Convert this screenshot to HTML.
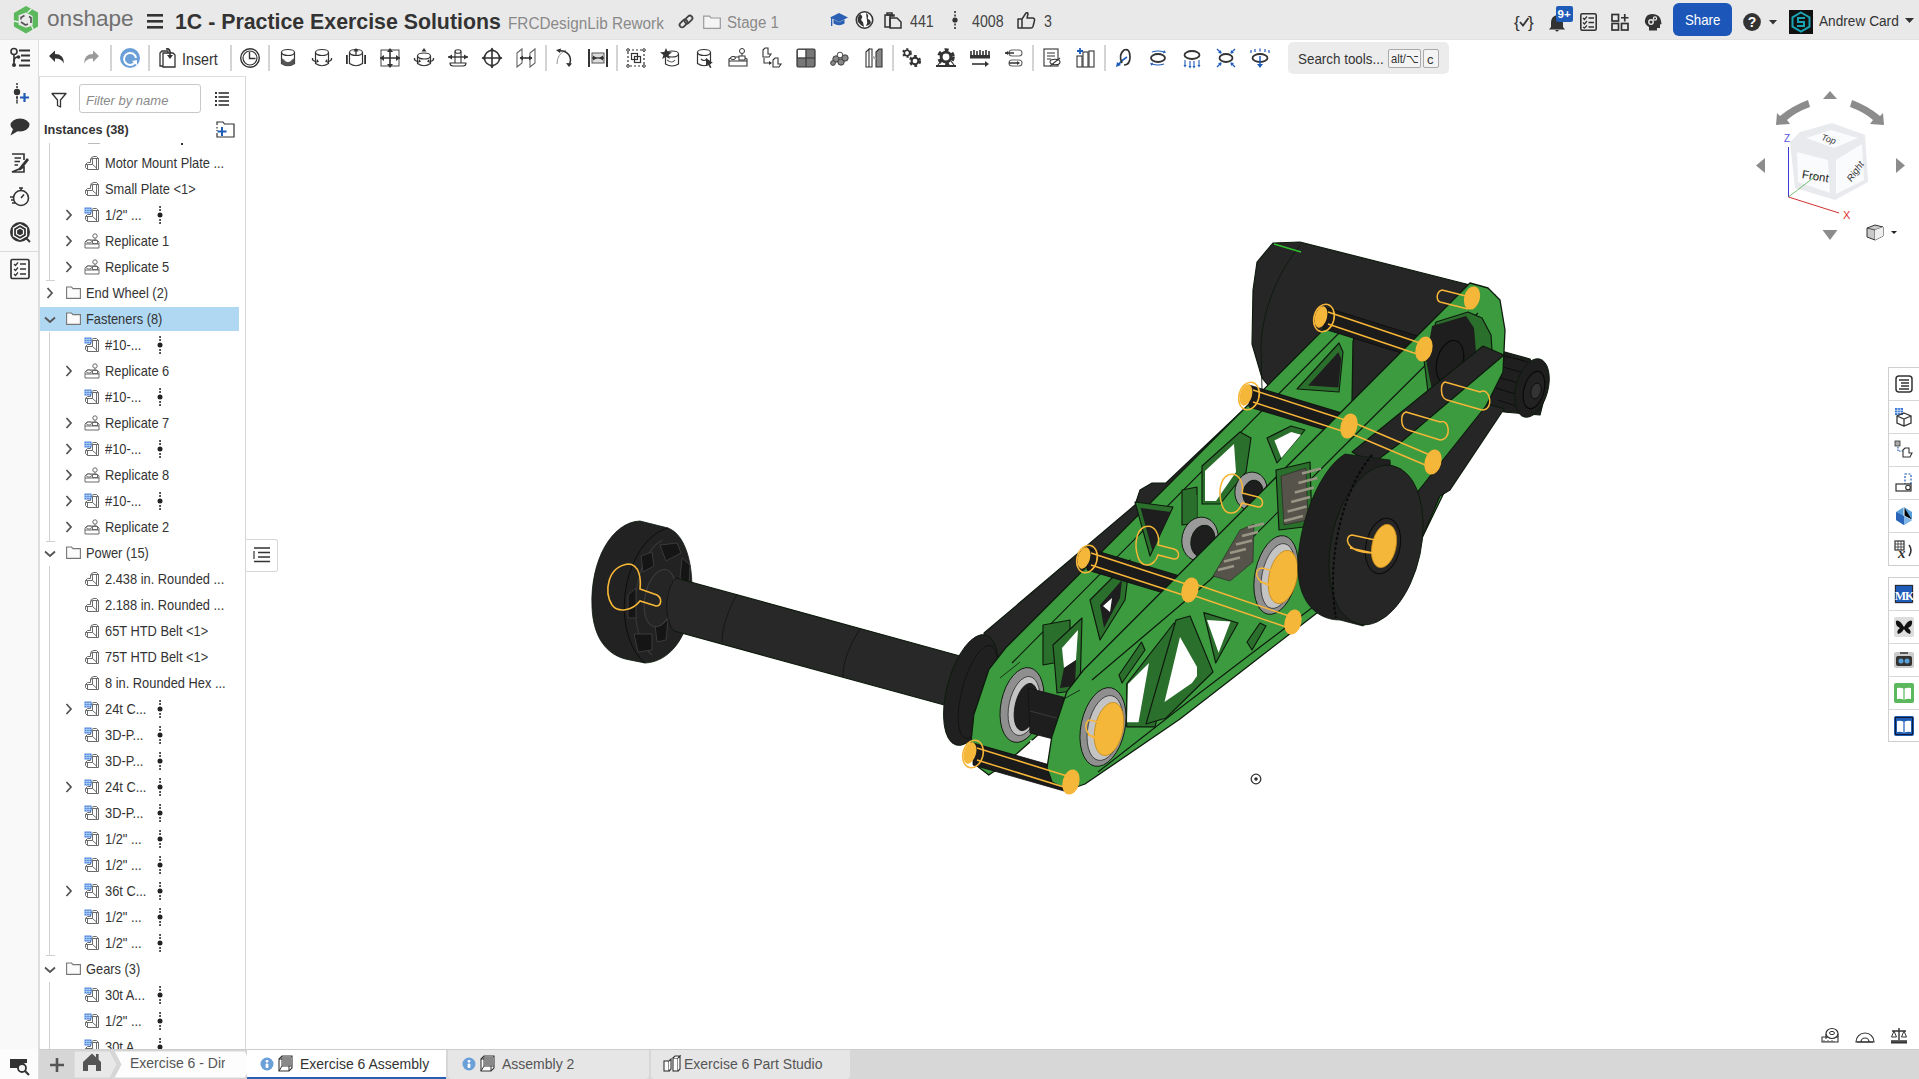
<!DOCTYPE html>
<html><head><meta charset="utf-8">
<style>
*{box-sizing:border-box;margin:0;padding:0}
html,body{width:1919px;height:1079px;overflow:hidden;background:#fff;font-family:"Liberation Sans",sans-serif;color:#333}
.a{position:absolute}
.t{white-space:nowrap;line-height:1}
svg{overflow:visible}
</style></head><body>

<div class="a" style="left:0px;top:0px;width:1919px;height:40px;background:#e9e9e9;border-bottom:1px solid #e2e2e2"></div>
<div class="a" style="left:0px;top:40px;width:39px;height:1039px;background:#f9f9f9;border-right:1px solid #dedede"></div>
<div class="a" style="left:0px;top:1049px;width:39px;height:30px;background:#fcfcfc;border-right:1px solid #dedede"></div>
<div class="a" style="left:39px;top:1050px;width:1880px;height:29px;background:#d7d7d7"></div>
<svg class="a" style="left:10px;top:4px" width="32" height="32" viewBox="0 0 32 32">
<path fill-rule="evenodd" fill="#5cb85c" d="M16 2 L28 8.6 V22.5 L16 29.4 L3.9 22.5 V8.9 Z M16 8.6 L22.6 11.9 V21.4 L16 23.7 L8.6 20.8 V11.3 Z"/>
<path d="M17.5 8.8 L21.5 5 M3.5 17 L9 18 M21.6 22 L23.5 26" stroke="#e9f5e9" stroke-width="1.4"/>
<path d="M14.5 11.5 L11 13.5 V15.5 M11 18 L15.5 21 L18 20 M19 12.5 L21 13.7 V19" fill="none" stroke="#555" stroke-width="1.7"/>
</svg>
<div class="a t" style="left:47px;top:8px;font-size:22.6px;color:#707070;font-weight:normal;letter-spacing:0px">onshape</div>
<svg class="a" style="left:147px;top:14px" width="16" height="15" viewBox="0 0 16 15"><rect x="0" y="0" width="16" height="2.6" fill="#333"/><rect x="0" y="6" width="16" height="2.6" fill="#333"/><rect x="0" y="12" width="16" height="2.6" fill="#333"/></svg>
<div class="a t" style="left:175px;top:11.2px;font-size:22.4px;color:#333;font-weight:bold;transform:scaleX(0.952);transform-origin:0 0;">1C - Practice Exercise Solutions</div>
<div class="a t" style="left:508px;top:15px;font-size:16.4px;color:#8a8a8a;font-weight:normal;transform:scaleX(0.935);transform-origin:0 0;">FRCDesignLib Rework</div>
<svg class="a" style="left:678px;top:14px" width="16" height="16" viewBox="0 0 16 16"><g fill="none" stroke="#444" stroke-width="1.8"><rect x="1" y="7" width="9" height="5" rx="2.5" transform="rotate(-45 5.5 9.5)"/><rect x="6" y="3" width="9" height="5" rx="2.5" transform="rotate(-45 10.5 5.5)"/></g></svg>
<svg class="a" style="left:703px;top:15px" width="18" height="14" viewBox="0 0 18 14"><path d="M0.7 1.2 H6.5 L8 3 H17.3 V13.3 H0.7 Z" fill="#f4f4f4" stroke="#9a9a9a" stroke-width="1.2"/></svg>
<div class="a t" style="left:726.5px;top:14.8px;font-size:16px;color:#8a8a8a;font-weight:normal;transform:scaleX(0.94);transform-origin:0 0;">Stage 1</div>
<svg class="a" style="left:830px;top:12px" width="18" height="16" viewBox="0 0 18 16"><path d="M9 1 L18 5.5 L9 10 L0 5.5 Z" fill="#2b5fb3"/><path d="M3.5 7.5 V11.5 Q9 15 14.5 11.5 V7.5 L9 10.3 Z" fill="#2b5fb3"/><rect x="1" y="6" width="1.3" height="8" fill="#2b5fb3"/></svg>
<svg class="a" style="left:855px;top:11px" width="19" height="18" viewBox="0 0 19 18"><circle cx="9.5" cy="9" r="8.2" fill="#fff" stroke="#333" stroke-width="1.6"/><path d="M5 3 Q8 5 7 7 Q5 9 8 11 L9 16 Q6 15 3 11 Q2 6 5 3Z M11 2 Q14 4 13 6 Q12 8 15 9 L16 12 Q14 15 11 15 Q13 12 12 10 Z" fill="#333"/></svg>
<svg class="a" style="left:884px;top:11px" width="18" height="18" viewBox="0 0 18 18"><g fill="none" stroke="#333" stroke-width="1.5"><path d="M3 2 H8 V4 H3 Z"/><path d="M1 4 H10 L10 5 H6 V16 H1 Z"/><path d="M6 7 H13 L17 11 V17 H6 Z"/></g></svg>
<div class="a t" style="left:909.5px;top:14px;font-size:15.8px;color:#444;font-weight:normal;transform:scaleX(0.9);transform-origin:0 0;">441</div>
<svg class="a" style="left:952px;top:11px" width="6" height="18" viewBox="0 0 6 18"><rect x="2.2" y="0" width="1.6" height="2" fill="#333"/><rect x="2.2" y="3.5" width="1.6" height="2" fill="#333"/><circle cx="3" cy="9" r="2.6" fill="#333"/><rect x="2.2" y="12.5" width="1.6" height="2" fill="#333"/><rect x="2.2" y="16" width="1.6" height="2" fill="#333"/></svg>
<div class="a t" style="left:972px;top:14px;font-size:15.8px;color:#444;font-weight:normal;transform:scaleX(0.9);transform-origin:0 0;">4008</div>
<svg class="a" style="left:1017px;top:11px" width="19" height="18" viewBox="0 0 19 18"><path d="M1 8 H5 V17 H1 Z M5 8 L9 2 Q11 1 11 3 L10 7 H16 Q18 7.5 17.5 9.5 L16 15.5 Q15.5 17 14 17 H5" fill="none" stroke="#333" stroke-width="1.5" stroke-linejoin="round"/></svg>
<div class="a t" style="left:1043.5px;top:14px;font-size:15.8px;color:#444;font-weight:normal;transform:scaleX(0.9);transform-origin:0 0;">3</div>
<svg class="a" style="left:1514px;top:13px" width="21" height="18" viewBox="0 0 21 18"><text x="0" y="15" font-family="Liberation Sans" font-size="17" fill="#333">{</text><text x="14" y="15" font-family="Liberation Sans" font-size="17" fill="#333">}</text><path d="M6 9 L9 12.5 L14.5 5" fill="none" stroke="#333" stroke-width="1.8"/></svg>
<svg class="a" style="left:1548px;top:14px" width="18" height="18" viewBox="0 0 18 18"><path d="M9 1 Q15 2 15 9 V13 L17 15.5 H1 L3 13 V9 Q3 2 9 1Z" fill="#333"/><path d="M7 16 Q9 19 11 16Z" fill="#333"/></svg>
<div class="a" style="left:1556px;top:6px;width:17px;height:16px;background:#1f5cb8;border-radius:2px"></div>
<div class="a t" style="left:1557.5px;top:8.5px;font-size:11.5px;color:#fff;font-weight:bold;">9+</div>
<svg class="a" style="left:1580px;top:13px" width="17" height="18" viewBox="0 0 17 18"><rect x="0.8" y="0.8" width="15.4" height="16.4" rx="1.5" fill="none" stroke="#333" stroke-width="1.6"/><path d="M3 5 L4.5 6.5 L7 3.5 M3 9.5 L4.5 11 L7 8 M3 14 L4.5 15 L7 12.5" fill="none" stroke="#333" stroke-width="1.2"/><path d="M8.5 5 H14 M8.5 9.5 H14 M8.5 14 H14" stroke="#333" stroke-width="1.5"/></svg>
<svg class="a" style="left:1611px;top:13px" width="19" height="18" viewBox="0 0 19 18"><g fill="none" stroke="#333" stroke-width="1.7"><rect x="1" y="1.5" width="6.5" height="6.5"/><rect x="1" y="10.5" width="6.5" height="6.5"/><rect x="10.5" y="10.5" width="6.5" height="6.5"/><path d="M13.75 1 V8.5 M10 4.75 H17.5"/></g></svg>
<svg class="a" style="left:1644px;top:13px" width="18" height="18" viewBox="0 0 18 18"><path d="M8 1 Q16 1 17 8 L17.5 11 L16 11.5 V15 H13 V17.5 H5 V14 Q0 11 1 7 Q2 1 8 1Z" fill="#333"/><circle cx="7" cy="9" r="2.2" fill="none" stroke="#e9e9e9" stroke-width="1.4"/><circle cx="11" cy="5.5" r="1.6" fill="none" stroke="#e9e9e9" stroke-width="1.2"/></svg>
<div class="a" style="left:1673px;top:3px;width:59px;height:33px;background:#1c56b8;border-radius:6px"></div>
<div class="a t" style="left:1685px;top:11.8px;font-size:15px;color:#fff;font-weight:normal;transform:scaleX(0.885);transform-origin:0 0;">Share</div>
<svg class="a" style="left:1743px;top:12.8px" width="18" height="18" viewBox="0 0 18 18"><circle cx="9" cy="9" r="8.9" fill="#333"/><text x="9" y="14" text-anchor="middle" font-family="Liberation Sans" font-weight="bold" font-size="14" fill="#fff">?</text></svg>
<svg class="a" style="left:1769px;top:20px" width="8" height="5" viewBox="0 0 8 5"><path d="M0 0 H8 L4 4.5Z" fill="#333"/></svg>
<svg class="a" style="left:1789px;top:10px" width="24" height="24" viewBox="0 0 24 24"><rect width="24" height="24" fill="#111"/><path d="M12 2.5 L20.5 7.3 V16.7 L12 21.5 L3.5 16.7 V7.3 Z" fill="none" stroke="#1aa3b3" stroke-width="2"/><path d="M16 8 H9 V12 H15 V16 H8" fill="none" stroke="#1aa3b3" stroke-width="2"/></svg>
<div class="a t" style="left:1818.8px;top:13px;font-size:15.2px;color:#333;font-weight:normal;transform:scaleX(0.9);transform-origin:0 0;">Andrew Card</div>
<svg class="a" style="left:1905px;top:18px" width="9" height="5" viewBox="0 0 9 5"><path d="M0 0 H9 L4.5 5Z" fill="#333"/></svg>
<div class="a" style="left:110px;top:45px;width:2px;height:26px;background:#d4d4d4"></div>
<div class="a" style="left:148px;top:45px;width:2px;height:26px;background:#d4d4d4"></div>
<div class="a" style="left:230px;top:45px;width:2px;height:26px;background:#d4d4d4"></div>
<div class="a" style="left:268px;top:45px;width:2px;height:26px;background:#d4d4d4"></div>
<div class="a" style="left:545px;top:45px;width:2px;height:26px;background:#d4d4d4"></div>
<div class="a" style="left:616px;top:45px;width:2px;height:26px;background:#d4d4d4"></div>
<div class="a" style="left:892px;top:45px;width:2px;height:26px;background:#d4d4d4"></div>
<div class="a" style="left:1032px;top:45px;width:2px;height:26px;background:#d4d4d4"></div>
<div class="a" style="left:1104px;top:45px;width:2px;height:26px;background:#d4d4d4"></div>
<svg class="a" style="left:46.0px;top:47.0px" width="22" height="22" viewBox="0 0 22 22"><path d="M3 9 L9 3.5 V7 Q18 7 18 16.5 Q15 11 9 11.5 V15 Z" fill="#333"/></svg>
<svg class="a" style="left:80.0px;top:47.0px" width="22" height="22" viewBox="0 0 22 22"><path d="M19 9 L13 3.5 V7 Q4 7 4 16.5 Q7 11 13 11.5 V15 Z" fill="#9a9a9a"/></svg>
<svg class="a" style="left:119.0px;top:47.0px" width="22" height="22" viewBox="0 0 22 22"><circle cx="11" cy="11" r="10" fill="#6a9fd8"/><path d="M15.5 16 A6 6 0 1 1 17 11" fill="none" stroke="#fff" stroke-width="2"/><path d="M13 14 L18 18.5 L18 13Z" fill="#fff"/></svg>
<svg class="a" style="left:157.0px;top:47.0px" width="22" height="22" viewBox="0 0 22 22"><g fill="none" stroke="#333" stroke-width="1.3"><path d="M3 6 L5 4 H11 V19 H3 Z"/><path d="M6 6 H16 L18 8 V20 H6 Z" fill="#fff"/></g><path d="M9 2 Q14 1 13 8" fill="none" stroke="#333" stroke-width="1.5"/><path d="M10 8 H16 L13 12Z" fill="#333"/></svg>
<div class="a t" style="left:182px;top:51.5px;font-size:15.6px;color:#333;font-weight:normal;transform:scaleX(0.915);transform-origin:0 0;">Insert</div>
<svg class="a" style="left:239.0px;top:47.0px" width="22" height="22" viewBox="0 0 22 22"><circle cx="11" cy="11" r="9.3" fill="#fff" stroke="#333" stroke-width="1.4"/><circle cx="11" cy="11" r="7" fill="none" stroke="#333" stroke-width="1.2"/><path d="M10.5 5 V11.5 H16.5" fill="none" stroke="#333" stroke-width="1.4"/></svg>
<svg class="a" style="left:277.0px;top:47.0px" width="22" height="22" viewBox="0 0 22 22"><ellipse cx="11" cy="5.5" rx="6.5" ry="3" fill="#fff" stroke="#333" stroke-width="1.2"/><path d="M4.5 5.5 V16.5 Q11 21 17.5 16.5 V5.5" fill="none" stroke="#333" stroke-width="1.2"/><path d="M4.5 11 Q8 13 8 14 Q11 16 14 14 Q14 13 17.5 11 V16.5 Q11 21 4.5 16.5Z" fill="#555"/></svg>
<svg class="a" style="left:311.0px;top:47.0px" width="22" height="22" viewBox="0 0 22 22"><ellipse cx="11" cy="5.5" rx="6.5" ry="3" fill="#fff" stroke="#333" stroke-width="1.2"/><path d="M4.5 5.5 V16.5 Q11 21 17.5 16.5 V5.5" fill="none" stroke="#333" stroke-width="1.2"/><path d="M1.5 11 Q1 14 5 14.5 M20.5 11 Q21 14 17 14.5" fill="none" stroke="#333" stroke-width="1.4"/><path d="M6 12 L8 14.5 L5 16Z M16 12 L14 14.5 L17 16Z" fill="#333"/></svg>
<svg class="a" style="left:345.0px;top:47.0px" width="22" height="22" viewBox="0 0 22 22"><ellipse cx="11" cy="5.5" rx="6.5" ry="3" fill="#fff" stroke="#333" stroke-width="1.2"/><path d="M4.5 5.5 V16.5 Q11 21 17.5 16.5 V5.5" fill="none" stroke="#333" stroke-width="1.2"/><rect x="1" y="8" width="1.8" height="9" fill="#333"/><rect x="19.2" y="8" width="1.8" height="9" fill="#333"/><path d="M11 1 L8.5 4.5 H13.5Z" fill="#333"/><path d="M11 4 V8" stroke="#333" stroke-width="1.3"/></svg>
<svg class="a" style="left:379.0px;top:47.0px" width="22" height="22" viewBox="0 0 22 22"><rect x="2" y="3" width="18" height="16" fill="none" stroke="#444" stroke-width="1"/><path d="M11 2 V20 M1 11 H21" stroke="#333" stroke-width="1.6"/><path d="M11 1 L8 5 H14Z M11 21 L8 17 H14Z M1 11 L5 8 V14Z M21 11 L17 8 V14Z" fill="#333"/></svg>
<svg class="a" style="left:413.0px;top:47.0px" width="22" height="22" viewBox="0 0 22 22"><ellipse cx="11" cy="9" rx="6.5" ry="3" fill="#fff" stroke="#333" stroke-width="1.2"/><path d="M4.5 9 V16.5 Q11 21 17.5 16.5 V9" fill="none" stroke="#333" stroke-width="1.2"/><path d="M11 1 L8.5 4.5 H13.5Z" fill="#333"/><path d="M1.5 11 Q1 14 5 14.5 M20.5 11 Q21 14 17 14.5" fill="none" stroke="#333" stroke-width="1.4"/><path d="M6 12 L8 14.5 L5 16Z M16 12 L14 14.5 L17 16Z" fill="#333"/></svg>
<svg class="a" style="left:447.0px;top:47.0px" width="22" height="22" viewBox="0 0 22 22"><ellipse cx="11" cy="4.5" rx="3" ry="1.8" fill="#fff" stroke="#333" stroke-width="1.1"/><path d="M8 4.5 V16 M14 4.5 V16" stroke="#333" stroke-width="1.1"/><path d="M3 16 Q3 19 6 19 H16 Q19 19 19 16 Z" fill="#fff" stroke="#333" stroke-width="1.1"/><path d="M1 10 H21" stroke="#333" stroke-width="1.4"/><path d="M1 10 L5 7.5 V12.5Z M21 10 L17 7.5 V12.5Z" fill="#333"/></svg>
<svg class="a" style="left:481.0px;top:47.0px" width="22" height="22" viewBox="0 0 22 22"><circle cx="11" cy="11" r="7.5" fill="none" stroke="#333" stroke-width="1.6"/><path d="M11 1.5 V20.5 M1.5 11 H20.5" stroke="#333" stroke-width="1.6"/><path d="M11 0.5 L8.5 4 H13.5Z M11 21.5 L8.5 18 H13.5Z M0.5 11 L4 8.5 V13.5Z M21.5 11 L18 8.5 V13.5Z" fill="#333"/></svg>
<svg class="a" style="left:515.0px;top:47.0px" width="22" height="22" viewBox="0 0 22 22"><path d="M2 6 L7 2 V16 L2 20Z M15 6 L20 2 V16 L15 20Z" fill="none" stroke="#666" stroke-width="1.1"/><path d="M5 11 H17" stroke="#333" stroke-width="1.6"/><path d="M4.5 11 L8 8.5 V13.5Z M17.5 11 L14 8.5 V13.5Z" fill="#333"/></svg>
<svg class="a" style="left:553.0px;top:47.0px" width="22" height="22" viewBox="0 0 22 22"><path d="M4 17 Q4 7 13 3" fill="none" stroke="#888" stroke-width="0.9"/><path d="M5 4 Q12 3 16 8 Q19 13 16 18" fill="none" stroke="#333" stroke-width="1.5"/><path d="M3 3 L8 1.5 L7 6Z M16 20 L13 16 L19 16.5Z" fill="#333"/></svg>
<svg class="a" style="left:587.0px;top:47.0px" width="22" height="22" viewBox="0 0 22 22"><rect x="1" y="2" width="2" height="18" fill="#333"/><rect x="19" y="2" width="2" height="18" fill="#333"/><rect x="5" y="6" width="12" height="10" fill="#ddd" stroke="#555" stroke-width="1"/><path d="M5 11 H17" stroke="#333" stroke-width="1.3"/><path d="M10 11 L6 8.5 V13.5Z M12 11 L16 8.5 V13.5Z" fill="#333"/></svg>
<svg class="a" style="left:625.0px;top:47.0px" width="22" height="22" viewBox="0 0 22 22"><rect x="3" y="3" width="16" height="16" fill="none" stroke="#333" stroke-width="1.2" stroke-dasharray="2 2"/><circle cx="3" cy="3" r="1.3" fill="#fff" stroke="#333"/><circle cx="19" cy="3" r="1.3" fill="#fff" stroke="#333"/><circle cx="3" cy="19" r="1.3" fill="#fff" stroke="#333"/><circle cx="19" cy="19" r="1.3" fill="#fff" stroke="#333"/><rect x="6.5" y="6.5" width="6" height="6" fill="none" stroke="#333" stroke-width="1.2"/><rect x="9.5" y="9.5" width="6" height="6" fill="none" stroke="#333" stroke-width="1.2"/></svg>
<svg class="a" style="left:659.0px;top:47.0px" width="22" height="22" viewBox="0 0 22 22"><ellipse cx="13" cy="7" rx="6.5" ry="3" fill="#fff" stroke="#333" stroke-width="1.2"/><path d="M6.5 7 V17 Q13 21 19.5 17 V7" fill="none" stroke="#333" stroke-width="1.2"/><path d="M8 13 Q13 17 16 13" fill="none" stroke="#666" stroke-width="1.2"/><path d="M7 1 L8.7 5 L13 5.2 L9.6 8 L10.8 12 L7 9.8 L3.2 12 L4.4 8 L1 5.2 L5.3 5Z" fill="#333"/></svg>
<svg class="a" style="left:693.0px;top:47.0px" width="22" height="22" viewBox="0 0 22 22"><ellipse cx="11" cy="5.5" rx="6.5" ry="3" fill="#fff" stroke="#333" stroke-width="1.2"/><path d="M4.5 5.5 V16.5 Q11 21 17.5 16.5 V5.5" fill="none" stroke="#333" stroke-width="1.2"/><path d="M8 12 Q11 15 14 12" fill="none" stroke="#333" stroke-width="1.1"/><path d="M13 11 L20 16 L16.5 16.5 L18.5 20.5 L17 21 L15 17 L13 19Z" fill="#333"/></svg>
<svg class="a" style="left:727.0px;top:47.0px" width="22" height="22" viewBox="0 0 22 22"><path d="M2 12 L6 10 H12 L12 10 H16 L20 12 V19 H2Z" fill="#fff" stroke="#333" stroke-width="1.1"/><path d="M2 14 H20" stroke="#333" stroke-width="1"/><ellipse cx="6" cy="11" rx="2.5" ry="1.5" fill="#fff" stroke="#333"/><ellipse cx="15" cy="4" rx="2.5" ry="2.5" fill="#fff" stroke="#333"/><path d="M15 6.5 V11" stroke="#333"/><rect x="12" y="9" width="6" height="4" fill="#fff" stroke="#333" stroke-width="1"/></svg>
<svg class="a" style="left:761.0px;top:47.0px" width="22" height="22" viewBox="0 0 22 22"><path d="M2 3 L4 1 H7 V7 H10 L8 10 H2Z" fill="#fff" stroke="#333" stroke-width="1.1"/><path d="M12 13 L14 11 H17 V17 H20 L18 20 H12Z" fill="#fff" stroke="#333" stroke-width="1.1"/><path d="M3 11 V16 H10" fill="none" stroke="#333" stroke-width="1.1"/><path d="M11 16 L8 14 V18Z" fill="#333"/></svg>
<svg class="a" style="left:795.0px;top:47.0px" width="22" height="22" viewBox="0 0 22 22"><rect x="2" y="2" width="18" height="18" rx="1.5" fill="#777" stroke="#333" stroke-width="1.2"/><rect x="3" y="3" width="7.5" height="7.5" fill="#fff"/><path d="M11 2 V20 M2 11 H20" stroke="#333" stroke-width="1"/></svg>
<svg class="a" style="left:829.0px;top:47.0px" width="22" height="22" viewBox="0 0 22 22"><g fill="#888" stroke="#333" stroke-width="0.9"><circle cx="7" cy="12" r="3.2"/><circle cx="12" cy="15" r="3.2"/><circle cx="16" cy="11" r="3.2"/><circle cx="11" cy="8" r="2.8" fill="#fff"/><circle cx="4" cy="16" r="2.4"/></g></svg>
<svg class="a" style="left:863.0px;top:47.0px" width="22" height="22" viewBox="0 0 22 22"><path d="M3 5 L6 2 V20 L3 20Z M6 2 H9 V20 H6" fill="#fff" stroke="#333" stroke-width="1.1"/><path d="M13 5 L16 2 H19 V20 H13Z" fill="#888" stroke="#333" stroke-width="1.1"/><path d="M9 9 L13 12" stroke="#aaa" stroke-width="2"/></svg>
<svg class="a" style="left:901.0px;top:47.0px" width="22" height="22" viewBox="0 0 22 22"><circle cx="6" cy="6" r="3.6" fill="none" stroke="#333" stroke-width="2.52" stroke-dasharray="1.9800000000000002 1.9800000000000002"/><circle cx="6" cy="6" r="2.7" fill="none" stroke="#333" stroke-width="1.62"/><circle cx="14" cy="14" r="4.5" fill="none" stroke="#333" stroke-width="3.15" stroke-dasharray="2.475 2.475"/><circle cx="14" cy="14" r="3.375" fill="none" stroke="#333" stroke-width="2.025"/></svg>
<svg class="a" style="left:935.0px;top:47.0px" width="22" height="22" viewBox="0 0 22 22"><circle cx="11" cy="10" r="6.5" fill="none" stroke="#333" stroke-width="4.55" stroke-dasharray="3.575 3.575"/><circle cx="11" cy="10" r="4.875" fill="none" stroke="#333" stroke-width="2.9250000000000003"/><rect x="1" y="18" width="20" height="2" fill="#333"/><path d="M3 18 L6 14 M19 18 L16 14" stroke="#333" stroke-width="1.2"/></svg>
<svg class="a" style="left:969.0px;top:47.0px" width="22" height="22" viewBox="0 0 22 22"><path d="M2 4 V11 M5 3 V11 M8 4 V11 M11 3 V11 M14 4 V11 M17 3 V11 M20 4 V11" stroke="#333" stroke-width="1.6"/><rect x="1" y="8" width="20" height="3.5" fill="#333"/><path d="M3 17 H18" stroke="#333" stroke-width="1.6"/><path d="M20 17 L16 14 V20Z" fill="#333"/></svg>
<svg class="a" style="left:1003.0px;top:47.0px" width="22" height="22" viewBox="0 0 22 22"><rect x="6" y="3" width="13" height="6" rx="3" fill="none" stroke="#666" stroke-width="1.1"/><rect x="6" y="13" width="13" height="6" rx="3" fill="none" stroke="#666" stroke-width="1.1"/><path d="M2 6 H11 M6 16 H15" stroke="#333" stroke-width="1.3"/><path d="M2 6 L5 4 V8Z M17 16 L14 14 V18Z" fill="#333"/></svg>
<svg class="a" style="left:1041.0px;top:47.0px" width="22" height="22" viewBox="0 0 22 22"><rect x="3" y="2" width="14" height="17" fill="#fff" stroke="#333" stroke-width="1.1"/><path d="M6 6 H14 M6 9 H14 M6 12 H10" stroke="#333" stroke-width="1"/><ellipse cx="14" cy="15" rx="5" ry="2.8" fill="#fff" stroke="#333" stroke-width="1.1"/><path d="M9 19 L19 11" stroke="#333" stroke-width="1.1"/></svg>
<svg class="a" style="left:1075.0px;top:47.0px" width="22" height="22" viewBox="0 0 22 22"><rect x="2" y="9" width="5" height="11" fill="#fff" stroke="#333" stroke-width="1.1"/><rect x="8" y="5" width="5" height="15" fill="#fff" stroke="#333" stroke-width="1.1"/><rect x="14" y="4" width="5" height="16" fill="#fff" stroke="#333" stroke-width="1.1"/><path d="M5 1 V7 M2 4 H8" stroke="#1f5cb8" stroke-width="1.8"/></svg>
<svg class="a" style="left:1113.0px;top:47.0px" width="22" height="22" viewBox="0 0 22 22"><path d="M5 18 Q9 13 14 10" fill="none" stroke="#1f5cb8" stroke-width="1.6"/><path d="M3 20 L4 15 L8 18Z" fill="#1f5cb8"/><path d="M9 16 Q5 8 11 3 Q17 1 17 10 Q17 18 11 18" fill="none" stroke="#333" stroke-width="1.7"/></svg>
<svg class="a" style="left:1147.0px;top:47.0px" width="22" height="22" viewBox="0 0 22 22"><ellipse cx="11" cy="11" rx="7" ry="4" fill="none" stroke="#333" stroke-width="1.8"/><path d="M5 5 Q11 3 17 5 M5 17 Q11 19 17 17" fill="none" stroke="#1f5cb8" stroke-width="1.2"/><path d="M17 3 L19 5.5 L16 6.5Z M5 19 L3 16.5 L6 15.5Z" fill="#1f5cb8"/></svg>
<svg class="a" style="left:1181.0px;top:47.0px" width="22" height="22" viewBox="0 0 22 22"><ellipse cx="11" cy="8" rx="7.5" ry="4" fill="none" stroke="#333" stroke-width="1.8"/><path d="M4 13 V19 M9 14 V20 M13 14 V20 M18 13 V19" stroke="#1f5cb8" stroke-width="1.1"/><path d="M2.5 18 H5.5 L4 20.5Z M7.5 19 H10.5 L9 21.5Z M11.5 19 H14.5 L13 21.5Z M16.5 18 H19.5 L18 20.5Z" fill="#1f5cb8"/></svg>
<svg class="a" style="left:1215.0px;top:47.0px" width="22" height="22" viewBox="0 0 22 22"><ellipse cx="11" cy="11" rx="6.5" ry="4" fill="none" stroke="#333" stroke-width="1.8"/><path d="M2 2 L6 6 M20 2 L16 6 M2 20 L6 16 M20 20 L16 16" stroke="#1f5cb8" stroke-width="1.3"/><path d="M6.5 6.5 L3 6 L6 3Z M15.5 6.5 L19 6 L16 3Z M6.5 15.5 L3 16 L6 19Z M15.5 15.5 L19 16 L16 19Z" fill="#1f5cb8"/></svg>
<svg class="a" style="left:1249.0px;top:47.0px" width="22" height="22" viewBox="0 0 22 22"><path d="M2 3 V6 M6 2 V5 M11 1.5 V4.5 M16 2 V5 M20 3 V6" stroke="#1f5cb8" stroke-width="1.2"/><ellipse cx="11" cy="11" rx="7.5" ry="4" fill="none" stroke="#333" stroke-width="1.8"/><path d="M11 9 V19" stroke="#1f5cb8" stroke-width="1.5"/><path d="M8 17 H14 L11 21Z" fill="#1f5cb8"/></svg>
<div class="a" style="left:1288px;top:42px;width:161px;height:32px;background:#ececec;border-radius:5px"></div>
<div class="a t" style="left:1298.3px;top:50.5px;font-size:15px;color:#333;font-weight:normal;transform:scaleX(0.893);transform-origin:0 0;">Search tools...</div>
<div class="a" style="left:1388px;top:49px;width:33px;height:19px;background:#f4f4f4;border:1px solid #aaa;border-radius:2px"></div>
<div class="a t" style="left:1391.3px;top:52.5px;font-size:12.2px;color:#333;font-weight:normal;transform:scaleX(0.92);transform-origin:0 0;">alt/⌥</div>
<div class="a" style="left:1422.5px;top:49px;width:16px;height:19px;background:#f4f4f4;border:1px solid #aaa;border-radius:2px"></div>
<div class="a t" style="left:1427px;top:52.5px;font-size:13px;color:#333;font-weight:normal;">c</div>
<svg class="a" style="left:9px;top:47px" width="22" height="22" viewBox="0 0 22 22"><circle cx="5" cy="4.5" r="3" fill="none" stroke="#333" stroke-width="1.6"/><path d="M5 7.5 V18" stroke="#333" stroke-width="1.6"/><circle cx="5" cy="18" r="2" fill="#333"/><path d="M5 15 Q5 10 9 10" fill="none" stroke="#333" stroke-width="1.6"/><circle cx="9.5" cy="10" r="1.8" fill="#333"/><path d="M10 3.5 H21 M12 8.5 H21 M12 13.5 H21 M10 18.5 H21" stroke="#333" stroke-width="1.8"/></svg>
<svg class="a" style="left:9px;top:82px" width="22" height="22" viewBox="0 0 22 22"><path d="M8 1 V4 M8 15 V18 M8 19.5 V22" stroke="#333" stroke-width="1.5" stroke-dasharray="2 1.5"/><circle cx="8" cy="10" r="3.2" fill="#333"/><path d="M8 4 V6 M8 14 V21" stroke="#333" stroke-width="1.5" stroke-dasharray="2 1.5"/><path d="M15.5 11 V20 M11 15.5 H20" stroke="#1f5cb8" stroke-width="2.2"/></svg>
<svg class="a" style="left:9px;top:116px" width="22" height="22" viewBox="0 0 22 22"><ellipse cx="11" cy="9" rx="9.5" ry="6.5" fill="#333"/><path d="M4 13 L1.5 19.5 L9 15Z" fill="#333"/></svg>
<svg class="a" style="left:9px;top:152px" width="22" height="22" viewBox="0 0 22 22"><path d="M3 2 H15 V8 M15 15 V20 H3 Z" fill="none" stroke="#333" stroke-width="1.6"/><path d="M5.5 6 H12 M5.5 9.5 H11 M5.5 13 H9" stroke="#333" stroke-width="1.5"/><path d="M10 16 L18 6 L20 8 L12 18 L9.5 18.5Z" fill="#333"/></svg>
<svg class="a" style="left:9px;top:186px" width="22" height="22" viewBox="0 0 22 22"><circle cx="12" cy="12" r="7.5" fill="none" stroke="#333" stroke-width="1.6"/><path d="M10 2 H14 M12 2 V4.5 M12 12 L15 8.5" stroke="#333" stroke-width="1.6"/><path d="M1 11 H5 M2 14 H5 M3 17 H6" stroke="#333" stroke-width="1.3"/></svg>
<svg class="a" style="left:9px;top:221px" width="22" height="22" viewBox="0 0 22 22"><circle cx="11" cy="11" r="10" fill="#333"/><path d="M11 3.5 L17.5 7.2 V14.8 L11 18.5 L4.5 14.8 V7.2Z" fill="none" stroke="#fff" stroke-width="1.3"/><path d="M11 7 L14.5 9 V13 L11 15 L7.5 13 V9Z" fill="none" stroke="#fff" stroke-width="1.2"/><path d="M17 17 L21 21" stroke="#333" stroke-width="2"/></svg>
<div class="a" style="left:0px;top:251px;width:39px;height:1px;background:#dadada"></div>
<svg class="a" style="left:9px;top:258px" width="22" height="22" viewBox="0 0 22 22"><rect x="2" y="1.5" width="18" height="19" rx="1.5" fill="none" stroke="#333" stroke-width="1.7"/><path d="M5 6 L6.5 7.5 L9 4.5 M5 11 L6.5 12.5 L9 9.5 M5 16 L6.5 17.5 L9 14.5" fill="none" stroke="#333" stroke-width="1.2"/><path d="M11 6 H17 M11 11 H17 M11 16 H17" stroke="#333" stroke-width="1.6"/></svg>
<svg class="a" style="left:9px;top:1054px" width="22" height="22" viewBox="0 0 22 22"><path d="M1 5 H18 V9 Q12 9 10 14 H1Z" fill="#333"/><circle cx="13" cy="14" r="4" fill="#f6f6f6" stroke="#333" stroke-width="1.8"/><path d="M16 17 L20 21" stroke="#333" stroke-width="2.2"/></svg>
<div class="a" style="left:39px;top:76px;width:207px;height:974px;background:#fff;border-top:1px solid #dedede;border-left:1px solid #dedede;border-right:1px solid #d6d6d6"></div>
<svg class="a" style="left:51px;top:92px" width="16" height="16" viewBox="0 0 16 16"><path d="M1 1.5 H15 L9.5 8 V15 L6.5 13.5 V8 Z" fill="none" stroke="#333" stroke-width="1.3" stroke-linejoin="round"/></svg>
<div class="a" style="left:79px;top:84px;width:122px;height:29px;border:1px solid #c9c9c9;border-radius:3px;background:#fff"></div>
<div class="a t" style="left:86px;top:94px;font-size:13px;color:#8a8a8a;font-weight:normal;font-style:italic">Filter by name</div>
<svg class="a" style="left:215px;top:92px" width="14" height="14" viewBox="0 0 14 14"><g fill="#333"><rect x="0" y="0" width="2" height="2"/><rect x="0" y="4" width="2" height="2"/><rect x="0" y="8" width="2" height="2"/><rect x="0" y="12" width="2" height="2"/><rect x="3.5" y="0.2" width="10.5" height="1.6"/><rect x="3.5" y="4.2" width="10.5" height="1.6"/><rect x="3.5" y="8.2" width="10.5" height="1.6"/><rect x="3.5" y="12.2" width="10.5" height="1.6"/></g></svg>
<div class="a t" style="left:44px;top:124px;font-size:12.7px;color:#333;font-weight:bold;">Instances (38)</div>
<svg class="a" style="left:216px;top:121px" width="19" height="17" viewBox="0 0 19 17"><path d="M1 4 V1 H7 L8.5 3 H18 V16 H1 V12" fill="none" stroke="#333" stroke-width="1.2"/><path d="M1 6 V10" stroke="#333" stroke-width="1.2" stroke-dasharray="1.5 1.5"/><path d="M6 6 V15 M1.5 10.5 H10.5" stroke="#1f5cb8" stroke-width="2"/></svg>
<div class="a" style="left:40px;top:143px;width:205px;height:907px;overflow:hidden">
<div class="a" style="left:0px;top:164px;width:199px;height:24px;background:#b0d8f3"></div>
<div class="a" style="left:9px;top:0px;width:1px;height:137px;background:#d0d0d0"></div>
<div class="a" style="left:6px;top:137px;width:9px;height:1px;background:#d0d0d0"></div>
<div class="a" style="left:9px;top:189px;width:1px;height:209px;background:#d0d0d0"></div>
<div class="a" style="left:6px;top:398px;width:9px;height:1px;background:#d0d0d0"></div>
<div class="a" style="left:9px;top:423px;width:1px;height:389px;background:#d0d0d0"></div>
<div class="a" style="left:6px;top:812px;width:9px;height:1px;background:#d0d0d0"></div>
<div class="a" style="left:9px;top:839px;width:1px;height:78px;background:#d0d0d0"></div>
<div class="a" style="left:48px;top:0px;width:12px;height:1px;background:#bbb"></div>
<div class="a" style="left:141px;top:0px;width:2px;height:2px;background:#333"></div>
<svg class="a" style="left:44px;top:12px" width="16" height="16" viewBox="0 0 16 16"><g fill="#fff" stroke="#6b6b6b" stroke-width="1" stroke-linejoin="round"><path d="M6.5 5 Q6.5 1.5 10 1.5 H12.5 L14.5 3.5 V14.5 H3.5 L1.5 12.5 V9.5 L3.5 7.5 H6.5 Z"/><path d="M6.5 5 Q6.5 3.5 8.5 3.5 H14.5 M8.5 3.5 V9.5 H1.5 M3.5 9.5 V14.5 M8.5 9.5 L12.5 13 V14.5 M12.5 3.5 V13" fill="none"/></g></svg>
<div class="a t" style="left:65px;top:12.5px;font-size:14.2px;color:#333;transform:scaleX(0.905);transform-origin:0 0">Motor Mount Plate ...</div>
<svg class="a" style="left:44px;top:38px" width="16" height="16" viewBox="0 0 16 16"><g fill="#fff" stroke="#6b6b6b" stroke-width="1" stroke-linejoin="round"><path d="M6.5 5 Q6.5 1.5 10 1.5 H12.5 L14.5 3.5 V14.5 H3.5 L1.5 12.5 V9.5 L3.5 7.5 H6.5 Z"/><path d="M6.5 5 Q6.5 3.5 8.5 3.5 H14.5 M8.5 3.5 V9.5 H1.5 M3.5 9.5 V14.5 M8.5 9.5 L12.5 13 V14.5 M12.5 3.5 V13" fill="none"/></g></svg>
<div class="a t" style="left:65px;top:38.5px;font-size:14.2px;color:#333;transform:scaleX(0.905);transform-origin:0 0">Small Plate &lt;1&gt;</div>
<svg class="a" style="left:25px;top:66px" width="8" height="12" viewBox="0 0 8 12"><path d="M1.5 1 L6 6 L1.5 11" fill="none" stroke="#555" stroke-width="1.8"/></svg>
<svg class="a" style="left:44px;top:64px" width="16" height="16" viewBox="0 0 16 16"><g fill="#fff" stroke="#6b6b6b" stroke-width="1" stroke-linejoin="round"><path d="M6.5 5 Q6.5 1.5 10 1.5 H12.5 L14.5 3.5 V14.5 H3.5 L1.5 12.5 V9.5 L3.5 7.5 H6.5 Z"/><path d="M6.5 5 Q6.5 3.5 8.5 3.5 H14.5 M8.5 3.5 V9.5 H1.5 M3.5 9.5 V14.5 M8.5 9.5 L12.5 13 V14.5 M12.5 3.5 V13" fill="none"/></g><rect x="0.5" y="0.5" width="7" height="6" fill="#4a86e0"/><path d="M0.5 2.5 H7.5 M0.5 4.5 H7.5 M2.8 0.5 V6.5 M5.2 0.5 V6.5" stroke="#cfe0f7" stroke-width="0.6"/></svg>
<div class="a t" style="left:65px;top:64.5px;font-size:14.2px;color:#333;transform:scaleX(0.905);transform-origin:0 0">1/2" ...</div>
<svg class="a" style="left:117px;top:63px" width="6" height="18" viewBox="0 0 6 18"><rect x="2.3" y="0" width="1.5" height="2" fill="#222"/><rect x="2.3" y="3" width="1.5" height="2" fill="#222"/><circle cx="3" cy="9" r="2.5" fill="#222"/><rect x="2.3" y="13" width="1.5" height="2" fill="#222"/><rect x="2.3" y="16" width="1.5" height="2" fill="#222"/></svg>
<svg class="a" style="left:25px;top:92px" width="8" height="12" viewBox="0 0 8 12"><path d="M1.5 1 L6 6 L1.5 11" fill="none" stroke="#555" stroke-width="1.8"/></svg>
<svg class="a" style="left:44px;top:90px" width="16" height="16" viewBox="0 0 16 16"><g fill="#fff" stroke="#6b6b6b" stroke-width="1"><path d="M1 9 L3 7 H13 L15 9 V15 H1 Z"/><path d="M1 11 H15"/><ellipse cx="5" cy="8.5" rx="2.5" ry="1.6"/><circle cx="11" cy="3" r="2.2"/><path d="M11 5.2 V8"/><rect x="8.5" y="7.5" width="5" height="3"/></g></svg>
<div class="a t" style="left:65px;top:90.5px;font-size:14.2px;color:#333;transform:scaleX(0.905);transform-origin:0 0">Replicate 1</div>
<svg class="a" style="left:25px;top:118px" width="8" height="12" viewBox="0 0 8 12"><path d="M1.5 1 L6 6 L1.5 11" fill="none" stroke="#555" stroke-width="1.8"/></svg>
<svg class="a" style="left:44px;top:116px" width="16" height="16" viewBox="0 0 16 16"><g fill="#fff" stroke="#6b6b6b" stroke-width="1"><path d="M1 9 L3 7 H13 L15 9 V15 H1 Z"/><path d="M1 11 H15"/><ellipse cx="5" cy="8.5" rx="2.5" ry="1.6"/><circle cx="11" cy="3" r="2.2"/><path d="M11 5.2 V8"/><rect x="8.5" y="7.5" width="5" height="3"/></g></svg>
<div class="a t" style="left:65px;top:116.5px;font-size:14.2px;color:#333;transform:scaleX(0.905);transform-origin:0 0">Replicate 5</div>
<svg class="a" style="left:6px;top:144px" width="8" height="12" viewBox="0 0 8 12"><path d="M1.5 1 L6 6 L1.5 11" fill="none" stroke="#555" stroke-width="1.8"/></svg>
<svg class="a" style="left:26px;top:143px" width="15" height="13" viewBox="0 0 15 13"><path d="M0.6 1 H5.5 L7 2.6 H14.4 V12.4 H0.6 Z" fill="#fbfbfb" stroke="#777" stroke-width="1.1"/></svg>
<div class="a t" style="left:46px;top:142.5px;font-size:14.2px;color:#333;transform:scaleX(0.905);transform-origin:0 0">End Wheel (2)</div>
<svg class="a" style="left:4px;top:173px" width="12" height="8" viewBox="0 0 12 8"><path d="M1 1.5 L6 6 L11 1.5" fill="none" stroke="#555" stroke-width="1.8"/></svg>
<svg class="a" style="left:26px;top:169px" width="15" height="13" viewBox="0 0 15 13"><path d="M0.6 1 H5.5 L7 2.6 H14.4 V12.4 H0.6 Z" fill="#fbfbfb" stroke="#777" stroke-width="1.1"/></svg>
<div class="a t" style="left:46px;top:168.5px;font-size:14.2px;color:#333;transform:scaleX(0.905);transform-origin:0 0">Fasteners (8)</div>
<svg class="a" style="left:44px;top:194px" width="16" height="16" viewBox="0 0 16 16"><g fill="#fff" stroke="#6b6b6b" stroke-width="1" stroke-linejoin="round"><path d="M6.5 5 Q6.5 1.5 10 1.5 H12.5 L14.5 3.5 V14.5 H3.5 L1.5 12.5 V9.5 L3.5 7.5 H6.5 Z"/><path d="M6.5 5 Q6.5 3.5 8.5 3.5 H14.5 M8.5 3.5 V9.5 H1.5 M3.5 9.5 V14.5 M8.5 9.5 L12.5 13 V14.5 M12.5 3.5 V13" fill="none"/></g><rect x="0.5" y="0.5" width="7" height="6" fill="#4a86e0"/><path d="M0.5 2.5 H7.5 M0.5 4.5 H7.5 M2.8 0.5 V6.5 M5.2 0.5 V6.5" stroke="#cfe0f7" stroke-width="0.6"/></svg>
<div class="a t" style="left:65px;top:194.5px;font-size:14.2px;color:#333;transform:scaleX(0.905);transform-origin:0 0">#10-...</div>
<svg class="a" style="left:117px;top:193px" width="6" height="18" viewBox="0 0 6 18"><rect x="2.3" y="0" width="1.5" height="2" fill="#222"/><rect x="2.3" y="3" width="1.5" height="2" fill="#222"/><circle cx="3" cy="9" r="2.5" fill="#222"/><rect x="2.3" y="13" width="1.5" height="2" fill="#222"/><rect x="2.3" y="16" width="1.5" height="2" fill="#222"/></svg>
<svg class="a" style="left:25px;top:222px" width="8" height="12" viewBox="0 0 8 12"><path d="M1.5 1 L6 6 L1.5 11" fill="none" stroke="#555" stroke-width="1.8"/></svg>
<svg class="a" style="left:44px;top:220px" width="16" height="16" viewBox="0 0 16 16"><g fill="#fff" stroke="#6b6b6b" stroke-width="1"><path d="M1 9 L3 7 H13 L15 9 V15 H1 Z"/><path d="M1 11 H15"/><ellipse cx="5" cy="8.5" rx="2.5" ry="1.6"/><circle cx="11" cy="3" r="2.2"/><path d="M11 5.2 V8"/><rect x="8.5" y="7.5" width="5" height="3"/></g></svg>
<div class="a t" style="left:65px;top:220.5px;font-size:14.2px;color:#333;transform:scaleX(0.905);transform-origin:0 0">Replicate 6</div>
<svg class="a" style="left:44px;top:246px" width="16" height="16" viewBox="0 0 16 16"><g fill="#fff" stroke="#6b6b6b" stroke-width="1" stroke-linejoin="round"><path d="M6.5 5 Q6.5 1.5 10 1.5 H12.5 L14.5 3.5 V14.5 H3.5 L1.5 12.5 V9.5 L3.5 7.5 H6.5 Z"/><path d="M6.5 5 Q6.5 3.5 8.5 3.5 H14.5 M8.5 3.5 V9.5 H1.5 M3.5 9.5 V14.5 M8.5 9.5 L12.5 13 V14.5 M12.5 3.5 V13" fill="none"/></g><rect x="0.5" y="0.5" width="7" height="6" fill="#4a86e0"/><path d="M0.5 2.5 H7.5 M0.5 4.5 H7.5 M2.8 0.5 V6.5 M5.2 0.5 V6.5" stroke="#cfe0f7" stroke-width="0.6"/></svg>
<div class="a t" style="left:65px;top:246.5px;font-size:14.2px;color:#333;transform:scaleX(0.905);transform-origin:0 0">#10-...</div>
<svg class="a" style="left:117px;top:245px" width="6" height="18" viewBox="0 0 6 18"><rect x="2.3" y="0" width="1.5" height="2" fill="#222"/><rect x="2.3" y="3" width="1.5" height="2" fill="#222"/><circle cx="3" cy="9" r="2.5" fill="#222"/><rect x="2.3" y="13" width="1.5" height="2" fill="#222"/><rect x="2.3" y="16" width="1.5" height="2" fill="#222"/></svg>
<svg class="a" style="left:25px;top:274px" width="8" height="12" viewBox="0 0 8 12"><path d="M1.5 1 L6 6 L1.5 11" fill="none" stroke="#555" stroke-width="1.8"/></svg>
<svg class="a" style="left:44px;top:272px" width="16" height="16" viewBox="0 0 16 16"><g fill="#fff" stroke="#6b6b6b" stroke-width="1"><path d="M1 9 L3 7 H13 L15 9 V15 H1 Z"/><path d="M1 11 H15"/><ellipse cx="5" cy="8.5" rx="2.5" ry="1.6"/><circle cx="11" cy="3" r="2.2"/><path d="M11 5.2 V8"/><rect x="8.5" y="7.5" width="5" height="3"/></g></svg>
<div class="a t" style="left:65px;top:272.5px;font-size:14.2px;color:#333;transform:scaleX(0.905);transform-origin:0 0">Replicate 7</div>
<svg class="a" style="left:25px;top:300px" width="8" height="12" viewBox="0 0 8 12"><path d="M1.5 1 L6 6 L1.5 11" fill="none" stroke="#555" stroke-width="1.8"/></svg>
<svg class="a" style="left:44px;top:298px" width="16" height="16" viewBox="0 0 16 16"><g fill="#fff" stroke="#6b6b6b" stroke-width="1" stroke-linejoin="round"><path d="M6.5 5 Q6.5 1.5 10 1.5 H12.5 L14.5 3.5 V14.5 H3.5 L1.5 12.5 V9.5 L3.5 7.5 H6.5 Z"/><path d="M6.5 5 Q6.5 3.5 8.5 3.5 H14.5 M8.5 3.5 V9.5 H1.5 M3.5 9.5 V14.5 M8.5 9.5 L12.5 13 V14.5 M12.5 3.5 V13" fill="none"/></g><rect x="0.5" y="0.5" width="7" height="6" fill="#4a86e0"/><path d="M0.5 2.5 H7.5 M0.5 4.5 H7.5 M2.8 0.5 V6.5 M5.2 0.5 V6.5" stroke="#cfe0f7" stroke-width="0.6"/></svg>
<div class="a t" style="left:65px;top:298.5px;font-size:14.2px;color:#333;transform:scaleX(0.905);transform-origin:0 0">#10-...</div>
<svg class="a" style="left:117px;top:297px" width="6" height="18" viewBox="0 0 6 18"><rect x="2.3" y="0" width="1.5" height="2" fill="#222"/><rect x="2.3" y="3" width="1.5" height="2" fill="#222"/><circle cx="3" cy="9" r="2.5" fill="#222"/><rect x="2.3" y="13" width="1.5" height="2" fill="#222"/><rect x="2.3" y="16" width="1.5" height="2" fill="#222"/></svg>
<svg class="a" style="left:25px;top:326px" width="8" height="12" viewBox="0 0 8 12"><path d="M1.5 1 L6 6 L1.5 11" fill="none" stroke="#555" stroke-width="1.8"/></svg>
<svg class="a" style="left:44px;top:324px" width="16" height="16" viewBox="0 0 16 16"><g fill="#fff" stroke="#6b6b6b" stroke-width="1"><path d="M1 9 L3 7 H13 L15 9 V15 H1 Z"/><path d="M1 11 H15"/><ellipse cx="5" cy="8.5" rx="2.5" ry="1.6"/><circle cx="11" cy="3" r="2.2"/><path d="M11 5.2 V8"/><rect x="8.5" y="7.5" width="5" height="3"/></g></svg>
<div class="a t" style="left:65px;top:324.5px;font-size:14.2px;color:#333;transform:scaleX(0.905);transform-origin:0 0">Replicate 8</div>
<svg class="a" style="left:25px;top:352px" width="8" height="12" viewBox="0 0 8 12"><path d="M1.5 1 L6 6 L1.5 11" fill="none" stroke="#555" stroke-width="1.8"/></svg>
<svg class="a" style="left:44px;top:350px" width="16" height="16" viewBox="0 0 16 16"><g fill="#fff" stroke="#6b6b6b" stroke-width="1" stroke-linejoin="round"><path d="M6.5 5 Q6.5 1.5 10 1.5 H12.5 L14.5 3.5 V14.5 H3.5 L1.5 12.5 V9.5 L3.5 7.5 H6.5 Z"/><path d="M6.5 5 Q6.5 3.5 8.5 3.5 H14.5 M8.5 3.5 V9.5 H1.5 M3.5 9.5 V14.5 M8.5 9.5 L12.5 13 V14.5 M12.5 3.5 V13" fill="none"/></g><rect x="0.5" y="0.5" width="7" height="6" fill="#4a86e0"/><path d="M0.5 2.5 H7.5 M0.5 4.5 H7.5 M2.8 0.5 V6.5 M5.2 0.5 V6.5" stroke="#cfe0f7" stroke-width="0.6"/></svg>
<div class="a t" style="left:65px;top:350.5px;font-size:14.2px;color:#333;transform:scaleX(0.905);transform-origin:0 0">#10-...</div>
<svg class="a" style="left:117px;top:349px" width="6" height="18" viewBox="0 0 6 18"><rect x="2.3" y="0" width="1.5" height="2" fill="#222"/><rect x="2.3" y="3" width="1.5" height="2" fill="#222"/><circle cx="3" cy="9" r="2.5" fill="#222"/><rect x="2.3" y="13" width="1.5" height="2" fill="#222"/><rect x="2.3" y="16" width="1.5" height="2" fill="#222"/></svg>
<svg class="a" style="left:25px;top:378px" width="8" height="12" viewBox="0 0 8 12"><path d="M1.5 1 L6 6 L1.5 11" fill="none" stroke="#555" stroke-width="1.8"/></svg>
<svg class="a" style="left:44px;top:376px" width="16" height="16" viewBox="0 0 16 16"><g fill="#fff" stroke="#6b6b6b" stroke-width="1"><path d="M1 9 L3 7 H13 L15 9 V15 H1 Z"/><path d="M1 11 H15"/><ellipse cx="5" cy="8.5" rx="2.5" ry="1.6"/><circle cx="11" cy="3" r="2.2"/><path d="M11 5.2 V8"/><rect x="8.5" y="7.5" width="5" height="3"/></g></svg>
<div class="a t" style="left:65px;top:376.5px;font-size:14.2px;color:#333;transform:scaleX(0.905);transform-origin:0 0">Replicate 2</div>
<svg class="a" style="left:4px;top:407px" width="12" height="8" viewBox="0 0 12 8"><path d="M1 1.5 L6 6 L11 1.5" fill="none" stroke="#555" stroke-width="1.8"/></svg>
<svg class="a" style="left:26px;top:403px" width="15" height="13" viewBox="0 0 15 13"><path d="M0.6 1 H5.5 L7 2.6 H14.4 V12.4 H0.6 Z" fill="#fbfbfb" stroke="#777" stroke-width="1.1"/></svg>
<div class="a t" style="left:46px;top:402.5px;font-size:14.2px;color:#333;transform:scaleX(0.905);transform-origin:0 0">Power (15)</div>
<svg class="a" style="left:44px;top:428px" width="16" height="16" viewBox="0 0 16 16"><g fill="#fff" stroke="#6b6b6b" stroke-width="1" stroke-linejoin="round"><path d="M6.5 5 Q6.5 1.5 10 1.5 H12.5 L14.5 3.5 V14.5 H3.5 L1.5 12.5 V9.5 L3.5 7.5 H6.5 Z"/><path d="M6.5 5 Q6.5 3.5 8.5 3.5 H14.5 M8.5 3.5 V9.5 H1.5 M3.5 9.5 V14.5 M8.5 9.5 L12.5 13 V14.5 M12.5 3.5 V13" fill="none"/></g></svg>
<div class="a t" style="left:65px;top:428.5px;font-size:14.2px;color:#333;transform:scaleX(0.905);transform-origin:0 0">2.438 in. Rounded ...</div>
<svg class="a" style="left:44px;top:454px" width="16" height="16" viewBox="0 0 16 16"><g fill="#fff" stroke="#6b6b6b" stroke-width="1" stroke-linejoin="round"><path d="M6.5 5 Q6.5 1.5 10 1.5 H12.5 L14.5 3.5 V14.5 H3.5 L1.5 12.5 V9.5 L3.5 7.5 H6.5 Z"/><path d="M6.5 5 Q6.5 3.5 8.5 3.5 H14.5 M8.5 3.5 V9.5 H1.5 M3.5 9.5 V14.5 M8.5 9.5 L12.5 13 V14.5 M12.5 3.5 V13" fill="none"/></g></svg>
<div class="a t" style="left:65px;top:454.5px;font-size:14.2px;color:#333;transform:scaleX(0.905);transform-origin:0 0">2.188 in. Rounded ...</div>
<svg class="a" style="left:44px;top:480px" width="16" height="16" viewBox="0 0 16 16"><g fill="#fff" stroke="#6b6b6b" stroke-width="1" stroke-linejoin="round"><path d="M6.5 5 Q6.5 1.5 10 1.5 H12.5 L14.5 3.5 V14.5 H3.5 L1.5 12.5 V9.5 L3.5 7.5 H6.5 Z"/><path d="M6.5 5 Q6.5 3.5 8.5 3.5 H14.5 M8.5 3.5 V9.5 H1.5 M3.5 9.5 V14.5 M8.5 9.5 L12.5 13 V14.5 M12.5 3.5 V13" fill="none"/></g></svg>
<div class="a t" style="left:65px;top:480.5px;font-size:14.2px;color:#333;transform:scaleX(0.905);transform-origin:0 0">65T HTD Belt &lt;1&gt;</div>
<svg class="a" style="left:44px;top:506px" width="16" height="16" viewBox="0 0 16 16"><g fill="#fff" stroke="#6b6b6b" stroke-width="1" stroke-linejoin="round"><path d="M6.5 5 Q6.5 1.5 10 1.5 H12.5 L14.5 3.5 V14.5 H3.5 L1.5 12.5 V9.5 L3.5 7.5 H6.5 Z"/><path d="M6.5 5 Q6.5 3.5 8.5 3.5 H14.5 M8.5 3.5 V9.5 H1.5 M3.5 9.5 V14.5 M8.5 9.5 L12.5 13 V14.5 M12.5 3.5 V13" fill="none"/></g></svg>
<div class="a t" style="left:65px;top:506.5px;font-size:14.2px;color:#333;transform:scaleX(0.905);transform-origin:0 0">75T HTD Belt &lt;1&gt;</div>
<svg class="a" style="left:44px;top:532px" width="16" height="16" viewBox="0 0 16 16"><g fill="#fff" stroke="#6b6b6b" stroke-width="1" stroke-linejoin="round"><path d="M6.5 5 Q6.5 1.5 10 1.5 H12.5 L14.5 3.5 V14.5 H3.5 L1.5 12.5 V9.5 L3.5 7.5 H6.5 Z"/><path d="M6.5 5 Q6.5 3.5 8.5 3.5 H14.5 M8.5 3.5 V9.5 H1.5 M3.5 9.5 V14.5 M8.5 9.5 L12.5 13 V14.5 M12.5 3.5 V13" fill="none"/></g></svg>
<div class="a t" style="left:65px;top:532.5px;font-size:14.2px;color:#333;transform:scaleX(0.905);transform-origin:0 0">8 in. Rounded Hex ...</div>
<svg class="a" style="left:25px;top:560px" width="8" height="12" viewBox="0 0 8 12"><path d="M1.5 1 L6 6 L1.5 11" fill="none" stroke="#555" stroke-width="1.8"/></svg>
<svg class="a" style="left:44px;top:558px" width="16" height="16" viewBox="0 0 16 16"><g fill="#fff" stroke="#6b6b6b" stroke-width="1" stroke-linejoin="round"><path d="M6.5 5 Q6.5 1.5 10 1.5 H12.5 L14.5 3.5 V14.5 H3.5 L1.5 12.5 V9.5 L3.5 7.5 H6.5 Z"/><path d="M6.5 5 Q6.5 3.5 8.5 3.5 H14.5 M8.5 3.5 V9.5 H1.5 M3.5 9.5 V14.5 M8.5 9.5 L12.5 13 V14.5 M12.5 3.5 V13" fill="none"/></g><rect x="0.5" y="0.5" width="7" height="6" fill="#4a86e0"/><path d="M0.5 2.5 H7.5 M0.5 4.5 H7.5 M2.8 0.5 V6.5 M5.2 0.5 V6.5" stroke="#cfe0f7" stroke-width="0.6"/></svg>
<div class="a t" style="left:65px;top:558.5px;font-size:14.2px;color:#333;transform:scaleX(0.905);transform-origin:0 0">24t C...</div>
<svg class="a" style="left:117px;top:557px" width="6" height="18" viewBox="0 0 6 18"><rect x="2.3" y="0" width="1.5" height="2" fill="#222"/><rect x="2.3" y="3" width="1.5" height="2" fill="#222"/><circle cx="3" cy="9" r="2.5" fill="#222"/><rect x="2.3" y="13" width="1.5" height="2" fill="#222"/><rect x="2.3" y="16" width="1.5" height="2" fill="#222"/></svg>
<svg class="a" style="left:44px;top:584px" width="16" height="16" viewBox="0 0 16 16"><g fill="#fff" stroke="#6b6b6b" stroke-width="1" stroke-linejoin="round"><path d="M6.5 5 Q6.5 1.5 10 1.5 H12.5 L14.5 3.5 V14.5 H3.5 L1.5 12.5 V9.5 L3.5 7.5 H6.5 Z"/><path d="M6.5 5 Q6.5 3.5 8.5 3.5 H14.5 M8.5 3.5 V9.5 H1.5 M3.5 9.5 V14.5 M8.5 9.5 L12.5 13 V14.5 M12.5 3.5 V13" fill="none"/></g><rect x="0.5" y="0.5" width="7" height="6" fill="#4a86e0"/><path d="M0.5 2.5 H7.5 M0.5 4.5 H7.5 M2.8 0.5 V6.5 M5.2 0.5 V6.5" stroke="#cfe0f7" stroke-width="0.6"/></svg>
<div class="a t" style="left:65px;top:584.5px;font-size:14.2px;color:#333;transform:scaleX(0.905);transform-origin:0 0">3D-P...</div>
<svg class="a" style="left:117px;top:583px" width="6" height="18" viewBox="0 0 6 18"><rect x="2.3" y="0" width="1.5" height="2" fill="#222"/><rect x="2.3" y="3" width="1.5" height="2" fill="#222"/><circle cx="3" cy="9" r="2.5" fill="#222"/><rect x="2.3" y="13" width="1.5" height="2" fill="#222"/><rect x="2.3" y="16" width="1.5" height="2" fill="#222"/></svg>
<svg class="a" style="left:44px;top:610px" width="16" height="16" viewBox="0 0 16 16"><g fill="#fff" stroke="#6b6b6b" stroke-width="1" stroke-linejoin="round"><path d="M6.5 5 Q6.5 1.5 10 1.5 H12.5 L14.5 3.5 V14.5 H3.5 L1.5 12.5 V9.5 L3.5 7.5 H6.5 Z"/><path d="M6.5 5 Q6.5 3.5 8.5 3.5 H14.5 M8.5 3.5 V9.5 H1.5 M3.5 9.5 V14.5 M8.5 9.5 L12.5 13 V14.5 M12.5 3.5 V13" fill="none"/></g><rect x="0.5" y="0.5" width="7" height="6" fill="#4a86e0"/><path d="M0.5 2.5 H7.5 M0.5 4.5 H7.5 M2.8 0.5 V6.5 M5.2 0.5 V6.5" stroke="#cfe0f7" stroke-width="0.6"/></svg>
<div class="a t" style="left:65px;top:610.5px;font-size:14.2px;color:#333;transform:scaleX(0.905);transform-origin:0 0">3D-P...</div>
<svg class="a" style="left:117px;top:609px" width="6" height="18" viewBox="0 0 6 18"><rect x="2.3" y="0" width="1.5" height="2" fill="#222"/><rect x="2.3" y="3" width="1.5" height="2" fill="#222"/><circle cx="3" cy="9" r="2.5" fill="#222"/><rect x="2.3" y="13" width="1.5" height="2" fill="#222"/><rect x="2.3" y="16" width="1.5" height="2" fill="#222"/></svg>
<svg class="a" style="left:25px;top:638px" width="8" height="12" viewBox="0 0 8 12"><path d="M1.5 1 L6 6 L1.5 11" fill="none" stroke="#555" stroke-width="1.8"/></svg>
<svg class="a" style="left:44px;top:636px" width="16" height="16" viewBox="0 0 16 16"><g fill="#fff" stroke="#6b6b6b" stroke-width="1" stroke-linejoin="round"><path d="M6.5 5 Q6.5 1.5 10 1.5 H12.5 L14.5 3.5 V14.5 H3.5 L1.5 12.5 V9.5 L3.5 7.5 H6.5 Z"/><path d="M6.5 5 Q6.5 3.5 8.5 3.5 H14.5 M8.5 3.5 V9.5 H1.5 M3.5 9.5 V14.5 M8.5 9.5 L12.5 13 V14.5 M12.5 3.5 V13" fill="none"/></g><rect x="0.5" y="0.5" width="7" height="6" fill="#4a86e0"/><path d="M0.5 2.5 H7.5 M0.5 4.5 H7.5 M2.8 0.5 V6.5 M5.2 0.5 V6.5" stroke="#cfe0f7" stroke-width="0.6"/></svg>
<div class="a t" style="left:65px;top:636.5px;font-size:14.2px;color:#333;transform:scaleX(0.905);transform-origin:0 0">24t C...</div>
<svg class="a" style="left:117px;top:635px" width="6" height="18" viewBox="0 0 6 18"><rect x="2.3" y="0" width="1.5" height="2" fill="#222"/><rect x="2.3" y="3" width="1.5" height="2" fill="#222"/><circle cx="3" cy="9" r="2.5" fill="#222"/><rect x="2.3" y="13" width="1.5" height="2" fill="#222"/><rect x="2.3" y="16" width="1.5" height="2" fill="#222"/></svg>
<svg class="a" style="left:44px;top:662px" width="16" height="16" viewBox="0 0 16 16"><g fill="#fff" stroke="#6b6b6b" stroke-width="1" stroke-linejoin="round"><path d="M6.5 5 Q6.5 1.5 10 1.5 H12.5 L14.5 3.5 V14.5 H3.5 L1.5 12.5 V9.5 L3.5 7.5 H6.5 Z"/><path d="M6.5 5 Q6.5 3.5 8.5 3.5 H14.5 M8.5 3.5 V9.5 H1.5 M3.5 9.5 V14.5 M8.5 9.5 L12.5 13 V14.5 M12.5 3.5 V13" fill="none"/></g><rect x="0.5" y="0.5" width="7" height="6" fill="#4a86e0"/><path d="M0.5 2.5 H7.5 M0.5 4.5 H7.5 M2.8 0.5 V6.5 M5.2 0.5 V6.5" stroke="#cfe0f7" stroke-width="0.6"/></svg>
<div class="a t" style="left:65px;top:662.5px;font-size:14.2px;color:#333;transform:scaleX(0.905);transform-origin:0 0">3D-P...</div>
<svg class="a" style="left:117px;top:661px" width="6" height="18" viewBox="0 0 6 18"><rect x="2.3" y="0" width="1.5" height="2" fill="#222"/><rect x="2.3" y="3" width="1.5" height="2" fill="#222"/><circle cx="3" cy="9" r="2.5" fill="#222"/><rect x="2.3" y="13" width="1.5" height="2" fill="#222"/><rect x="2.3" y="16" width="1.5" height="2" fill="#222"/></svg>
<svg class="a" style="left:44px;top:688px" width="16" height="16" viewBox="0 0 16 16"><g fill="#fff" stroke="#6b6b6b" stroke-width="1" stroke-linejoin="round"><path d="M6.5 5 Q6.5 1.5 10 1.5 H12.5 L14.5 3.5 V14.5 H3.5 L1.5 12.5 V9.5 L3.5 7.5 H6.5 Z"/><path d="M6.5 5 Q6.5 3.5 8.5 3.5 H14.5 M8.5 3.5 V9.5 H1.5 M3.5 9.5 V14.5 M8.5 9.5 L12.5 13 V14.5 M12.5 3.5 V13" fill="none"/></g><rect x="0.5" y="0.5" width="7" height="6" fill="#4a86e0"/><path d="M0.5 2.5 H7.5 M0.5 4.5 H7.5 M2.8 0.5 V6.5 M5.2 0.5 V6.5" stroke="#cfe0f7" stroke-width="0.6"/></svg>
<div class="a t" style="left:65px;top:688.5px;font-size:14.2px;color:#333;transform:scaleX(0.905);transform-origin:0 0">1/2" ...</div>
<svg class="a" style="left:117px;top:687px" width="6" height="18" viewBox="0 0 6 18"><rect x="2.3" y="0" width="1.5" height="2" fill="#222"/><rect x="2.3" y="3" width="1.5" height="2" fill="#222"/><circle cx="3" cy="9" r="2.5" fill="#222"/><rect x="2.3" y="13" width="1.5" height="2" fill="#222"/><rect x="2.3" y="16" width="1.5" height="2" fill="#222"/></svg>
<svg class="a" style="left:44px;top:714px" width="16" height="16" viewBox="0 0 16 16"><g fill="#fff" stroke="#6b6b6b" stroke-width="1" stroke-linejoin="round"><path d="M6.5 5 Q6.5 1.5 10 1.5 H12.5 L14.5 3.5 V14.5 H3.5 L1.5 12.5 V9.5 L3.5 7.5 H6.5 Z"/><path d="M6.5 5 Q6.5 3.5 8.5 3.5 H14.5 M8.5 3.5 V9.5 H1.5 M3.5 9.5 V14.5 M8.5 9.5 L12.5 13 V14.5 M12.5 3.5 V13" fill="none"/></g><rect x="0.5" y="0.5" width="7" height="6" fill="#4a86e0"/><path d="M0.5 2.5 H7.5 M0.5 4.5 H7.5 M2.8 0.5 V6.5 M5.2 0.5 V6.5" stroke="#cfe0f7" stroke-width="0.6"/></svg>
<div class="a t" style="left:65px;top:714.5px;font-size:14.2px;color:#333;transform:scaleX(0.905);transform-origin:0 0">1/2" ...</div>
<svg class="a" style="left:117px;top:713px" width="6" height="18" viewBox="0 0 6 18"><rect x="2.3" y="0" width="1.5" height="2" fill="#222"/><rect x="2.3" y="3" width="1.5" height="2" fill="#222"/><circle cx="3" cy="9" r="2.5" fill="#222"/><rect x="2.3" y="13" width="1.5" height="2" fill="#222"/><rect x="2.3" y="16" width="1.5" height="2" fill="#222"/></svg>
<svg class="a" style="left:25px;top:742px" width="8" height="12" viewBox="0 0 8 12"><path d="M1.5 1 L6 6 L1.5 11" fill="none" stroke="#555" stroke-width="1.8"/></svg>
<svg class="a" style="left:44px;top:740px" width="16" height="16" viewBox="0 0 16 16"><g fill="#fff" stroke="#6b6b6b" stroke-width="1" stroke-linejoin="round"><path d="M6.5 5 Q6.5 1.5 10 1.5 H12.5 L14.5 3.5 V14.5 H3.5 L1.5 12.5 V9.5 L3.5 7.5 H6.5 Z"/><path d="M6.5 5 Q6.5 3.5 8.5 3.5 H14.5 M8.5 3.5 V9.5 H1.5 M3.5 9.5 V14.5 M8.5 9.5 L12.5 13 V14.5 M12.5 3.5 V13" fill="none"/></g><rect x="0.5" y="0.5" width="7" height="6" fill="#4a86e0"/><path d="M0.5 2.5 H7.5 M0.5 4.5 H7.5 M2.8 0.5 V6.5 M5.2 0.5 V6.5" stroke="#cfe0f7" stroke-width="0.6"/></svg>
<div class="a t" style="left:65px;top:740.5px;font-size:14.2px;color:#333;transform:scaleX(0.905);transform-origin:0 0">36t C...</div>
<svg class="a" style="left:117px;top:739px" width="6" height="18" viewBox="0 0 6 18"><rect x="2.3" y="0" width="1.5" height="2" fill="#222"/><rect x="2.3" y="3" width="1.5" height="2" fill="#222"/><circle cx="3" cy="9" r="2.5" fill="#222"/><rect x="2.3" y="13" width="1.5" height="2" fill="#222"/><rect x="2.3" y="16" width="1.5" height="2" fill="#222"/></svg>
<svg class="a" style="left:44px;top:766px" width="16" height="16" viewBox="0 0 16 16"><g fill="#fff" stroke="#6b6b6b" stroke-width="1" stroke-linejoin="round"><path d="M6.5 5 Q6.5 1.5 10 1.5 H12.5 L14.5 3.5 V14.5 H3.5 L1.5 12.5 V9.5 L3.5 7.5 H6.5 Z"/><path d="M6.5 5 Q6.5 3.5 8.5 3.5 H14.5 M8.5 3.5 V9.5 H1.5 M3.5 9.5 V14.5 M8.5 9.5 L12.5 13 V14.5 M12.5 3.5 V13" fill="none"/></g><rect x="0.5" y="0.5" width="7" height="6" fill="#4a86e0"/><path d="M0.5 2.5 H7.5 M0.5 4.5 H7.5 M2.8 0.5 V6.5 M5.2 0.5 V6.5" stroke="#cfe0f7" stroke-width="0.6"/></svg>
<div class="a t" style="left:65px;top:766.5px;font-size:14.2px;color:#333;transform:scaleX(0.905);transform-origin:0 0">1/2" ...</div>
<svg class="a" style="left:117px;top:765px" width="6" height="18" viewBox="0 0 6 18"><rect x="2.3" y="0" width="1.5" height="2" fill="#222"/><rect x="2.3" y="3" width="1.5" height="2" fill="#222"/><circle cx="3" cy="9" r="2.5" fill="#222"/><rect x="2.3" y="13" width="1.5" height="2" fill="#222"/><rect x="2.3" y="16" width="1.5" height="2" fill="#222"/></svg>
<svg class="a" style="left:44px;top:792px" width="16" height="16" viewBox="0 0 16 16"><g fill="#fff" stroke="#6b6b6b" stroke-width="1" stroke-linejoin="round"><path d="M6.5 5 Q6.5 1.5 10 1.5 H12.5 L14.5 3.5 V14.5 H3.5 L1.5 12.5 V9.5 L3.5 7.5 H6.5 Z"/><path d="M6.5 5 Q6.5 3.5 8.5 3.5 H14.5 M8.5 3.5 V9.5 H1.5 M3.5 9.5 V14.5 M8.5 9.5 L12.5 13 V14.5 M12.5 3.5 V13" fill="none"/></g><rect x="0.5" y="0.5" width="7" height="6" fill="#4a86e0"/><path d="M0.5 2.5 H7.5 M0.5 4.5 H7.5 M2.8 0.5 V6.5 M5.2 0.5 V6.5" stroke="#cfe0f7" stroke-width="0.6"/></svg>
<div class="a t" style="left:65px;top:792.5px;font-size:14.2px;color:#333;transform:scaleX(0.905);transform-origin:0 0">1/2" ...</div>
<svg class="a" style="left:117px;top:791px" width="6" height="18" viewBox="0 0 6 18"><rect x="2.3" y="0" width="1.5" height="2" fill="#222"/><rect x="2.3" y="3" width="1.5" height="2" fill="#222"/><circle cx="3" cy="9" r="2.5" fill="#222"/><rect x="2.3" y="13" width="1.5" height="2" fill="#222"/><rect x="2.3" y="16" width="1.5" height="2" fill="#222"/></svg>
<svg class="a" style="left:4px;top:823px" width="12" height="8" viewBox="0 0 12 8"><path d="M1 1.5 L6 6 L11 1.5" fill="none" stroke="#555" stroke-width="1.8"/></svg>
<svg class="a" style="left:26px;top:819px" width="15" height="13" viewBox="0 0 15 13"><path d="M0.6 1 H5.5 L7 2.6 H14.4 V12.4 H0.6 Z" fill="#fbfbfb" stroke="#777" stroke-width="1.1"/></svg>
<div class="a t" style="left:46px;top:818.5px;font-size:14.2px;color:#333;transform:scaleX(0.905);transform-origin:0 0">Gears (3)</div>
<svg class="a" style="left:44px;top:844px" width="16" height="16" viewBox="0 0 16 16"><g fill="#fff" stroke="#6b6b6b" stroke-width="1" stroke-linejoin="round"><path d="M6.5 5 Q6.5 1.5 10 1.5 H12.5 L14.5 3.5 V14.5 H3.5 L1.5 12.5 V9.5 L3.5 7.5 H6.5 Z"/><path d="M6.5 5 Q6.5 3.5 8.5 3.5 H14.5 M8.5 3.5 V9.5 H1.5 M3.5 9.5 V14.5 M8.5 9.5 L12.5 13 V14.5 M12.5 3.5 V13" fill="none"/></g><rect x="0.5" y="0.5" width="7" height="6" fill="#4a86e0"/><path d="M0.5 2.5 H7.5 M0.5 4.5 H7.5 M2.8 0.5 V6.5 M5.2 0.5 V6.5" stroke="#cfe0f7" stroke-width="0.6"/></svg>
<div class="a t" style="left:65px;top:844.5px;font-size:14.2px;color:#333;transform:scaleX(0.905);transform-origin:0 0">30t A...</div>
<svg class="a" style="left:117px;top:843px" width="6" height="18" viewBox="0 0 6 18"><rect x="2.3" y="0" width="1.5" height="2" fill="#222"/><rect x="2.3" y="3" width="1.5" height="2" fill="#222"/><circle cx="3" cy="9" r="2.5" fill="#222"/><rect x="2.3" y="13" width="1.5" height="2" fill="#222"/><rect x="2.3" y="16" width="1.5" height="2" fill="#222"/></svg>
<svg class="a" style="left:44px;top:870px" width="16" height="16" viewBox="0 0 16 16"><g fill="#fff" stroke="#6b6b6b" stroke-width="1" stroke-linejoin="round"><path d="M6.5 5 Q6.5 1.5 10 1.5 H12.5 L14.5 3.5 V14.5 H3.5 L1.5 12.5 V9.5 L3.5 7.5 H6.5 Z"/><path d="M6.5 5 Q6.5 3.5 8.5 3.5 H14.5 M8.5 3.5 V9.5 H1.5 M3.5 9.5 V14.5 M8.5 9.5 L12.5 13 V14.5 M12.5 3.5 V13" fill="none"/></g><rect x="0.5" y="0.5" width="7" height="6" fill="#4a86e0"/><path d="M0.5 2.5 H7.5 M0.5 4.5 H7.5 M2.8 0.5 V6.5 M5.2 0.5 V6.5" stroke="#cfe0f7" stroke-width="0.6"/></svg>
<div class="a t" style="left:65px;top:870.5px;font-size:14.2px;color:#333;transform:scaleX(0.905);transform-origin:0 0">1/2" ...</div>
<svg class="a" style="left:117px;top:869px" width="6" height="18" viewBox="0 0 6 18"><rect x="2.3" y="0" width="1.5" height="2" fill="#222"/><rect x="2.3" y="3" width="1.5" height="2" fill="#222"/><circle cx="3" cy="9" r="2.5" fill="#222"/><rect x="2.3" y="13" width="1.5" height="2" fill="#222"/><rect x="2.3" y="16" width="1.5" height="2" fill="#222"/></svg>
<svg class="a" style="left:44px;top:896px" width="16" height="16" viewBox="0 0 16 16"><g fill="#fff" stroke="#6b6b6b" stroke-width="1" stroke-linejoin="round"><path d="M6.5 5 Q6.5 1.5 10 1.5 H12.5 L14.5 3.5 V14.5 H3.5 L1.5 12.5 V9.5 L3.5 7.5 H6.5 Z"/><path d="M6.5 5 Q6.5 3.5 8.5 3.5 H14.5 M8.5 3.5 V9.5 H1.5 M3.5 9.5 V14.5 M8.5 9.5 L12.5 13 V14.5 M12.5 3.5 V13" fill="none"/></g><rect x="0.5" y="0.5" width="7" height="6" fill="#4a86e0"/><path d="M0.5 2.5 H7.5 M0.5 4.5 H7.5 M2.8 0.5 V6.5 M5.2 0.5 V6.5" stroke="#cfe0f7" stroke-width="0.6"/></svg>
<div class="a t" style="left:65px;top:896.5px;font-size:14.2px;color:#333;transform:scaleX(0.905);transform-origin:0 0">30t A...</div>
<svg class="a" style="left:117px;top:895px" width="6" height="18" viewBox="0 0 6 18"><rect x="2.3" y="0" width="1.5" height="2" fill="#222"/><rect x="2.3" y="3" width="1.5" height="2" fill="#222"/><circle cx="3" cy="9" r="2.5" fill="#222"/><rect x="2.3" y="13" width="1.5" height="2" fill="#222"/><rect x="2.3" y="16" width="1.5" height="2" fill="#222"/></svg>
</div>
<div class="a" style="left:39px;top:1049px;width:1880px;height:1px;background:#cdcdcd"></div>
<div class="a" style="left:39px;top:1050px;width:35px;height:29px;background:#d6d6d6"></div>
<svg class="a" style="left:49px;top:1057px" width="16" height="16" viewBox="0 0 16 16"><path d="M8 1 V15 M1 8 H15" stroke="#555" stroke-width="2.6"/></svg>
<svg class="a" style="left:74px;top:1050px" width="180" height="29" viewBox="0 0 180 29"><path d="M0 1 H36 L43 14.5 L36 28 H0Z" fill="#e8e8e8" stroke="#d0d0d0" stroke-width="0.8"/><path d="M40 1 H171 L178 14.5 L171 28 H40 L47 14.5Z" fill="#fdfdfd" stroke="#d0d0d0" stroke-width="0.8"/></svg>
<svg class="a" style="left:83px;top:1053px" width="18" height="18" viewBox="0 0 18 18"><path d="M9 0.5 L18 9 V18 H13 V12 H5 V18 H0 V9 Z" fill="#555"/><rect x="13" y="1" width="2.6" height="6" fill="#555"/></svg>
<div class="a t" style="left:130px;top:1056px;width:95px;overflow:hidden;font-size:14px;color:#555">Exercise 6 - Dire</div>
<div class="a" style="left:247px;top:1050px;width:199px;height:29px;background:#fff;border-bottom:2px solid #2a5db5"></div>
<svg class="a" style="left:260px;top:1057px" width="14" height="14" viewBox="0 0 14 14"><circle cx="7" cy="7" r="6.5" fill="#6a9fd8"/><rect x="5.6" y="3" width="2.8" height="2.4" rx="1" fill="#fff"/><rect x="5.6" y="6.5" width="2.8" height="4.5" rx="1" fill="#fff"/></svg>
<svg class="a" style="left:278px;top:1055px" width="15" height="17" viewBox="0 0 15 17"><path d="M1 4 L4 1 H14 V13 L11 16 H1 Z" fill="#fff" stroke="#333" stroke-width="1.1"/><path d="M4 1 V11 H14 M4 11 L1 16 M1 4 H11 V16 M11 4 L14 1" fill="none" stroke="#333" stroke-width="1"/><path d="M4.2 1.5 H13.5 V10.8 H4.2Z" fill="#888"/></svg>
<div class="a t" style="left:300px;top:1057px;font-size:14px;color:#333;font-weight:normal;">Exercise 6 Assembly</div>
<div class="a" style="left:448px;top:1050px;width:201px;height:29px;background:#e6e6e6;border-radius:0 0 4px 4px"></div>
<svg class="a" style="left:462px;top:1057px" width="14" height="14" viewBox="0 0 14 14"><circle cx="7" cy="7" r="6.5" fill="#6a9fd8"/><rect x="5.6" y="3" width="2.8" height="2.4" rx="1" fill="#fff"/><rect x="5.6" y="6.5" width="2.8" height="4.5" rx="1" fill="#fff"/></svg>
<svg class="a" style="left:480px;top:1055px" width="15" height="17" viewBox="0 0 15 17"><path d="M1 4 L4 1 H14 V13 L11 16 H1 Z" fill="#fff" stroke="#333" stroke-width="1.1"/><path d="M4 1 V11 H14 M4 11 L1 16 M1 4 H11 V16 M11 4 L14 1" fill="none" stroke="#333" stroke-width="1"/><path d="M4.2 1.5 H13.5 V10.8 H4.2Z" fill="#888"/></svg>
<div class="a t" style="left:502px;top:1057px;font-size:14px;color:#555;font-weight:normal;">Assembly 2</div>
<div class="a" style="left:651px;top:1050px;width:199px;height:29px;background:#e6e6e6;border-radius:0 0 4px 4px"></div>
<svg class="a" style="left:663px;top:1055px" width="18" height="17" viewBox="0 0 18 17"><g fill="#fff" stroke="#333" stroke-width="1.1"><rect x="1" y="6" width="5" height="10"/><path d="M6 6 L8 4 V14 L6 16"/><rect x="10" y="3" width="5" height="13"/><path d="M10 3 L12 1 H17 L15 3 M15 3 L17 1 V14 L15 16"/></g></svg>
<div class="a t" style="left:684px;top:1057px;font-size:14px;color:#555;font-weight:normal;">Exercise 6 Part Studio</div>
<div class="a" style="left:246px;top:539px;width:32px;height:33px;background:#fff;border:1px solid #d6d6d6;border-left:none;border-radius:0 3px 3px 0"></div>
<svg class="a" style="left:253px;top:546px" width="18" height="18" viewBox="0 0 18 18"><path d="M1 2 H17 M5 6.5 H17 M5 11 H17 M1 15.5 H17" stroke="#333" stroke-width="1.6"/><path d="M1 5 V13" stroke="#333" stroke-width="1.2"/></svg>
<div class="a" style="left:1888px;top:367px;width:31px;height:199px;background:#fff;border:1px solid #cfcfcf;border-right:none"></div>
<div class="a" style="left:1889px;top:400px;width:30px;height:1px;background:#d8d8d8"></div>
<div class="a" style="left:1889px;top:433px;width:30px;height:1px;background:#d8d8d8"></div>
<div class="a" style="left:1889px;top:466px;width:30px;height:1px;background:#d8d8d8"></div>
<div class="a" style="left:1889px;top:499px;width:30px;height:1px;background:#d8d8d8"></div>
<div class="a" style="left:1889px;top:532px;width:30px;height:1px;background:#d8d8d8"></div>
<div class="a" style="left:1888px;top:577px;width:31px;height:165px;background:#fff;border:1px solid #cfcfcf;border-right:none"></div>
<div class="a" style="left:1889px;top:610px;width:30px;height:1px;background:#d8d8d8"></div>
<div class="a" style="left:1889px;top:643px;width:30px;height:1px;background:#d8d8d8"></div>
<div class="a" style="left:1889px;top:676px;width:30px;height:1px;background:#d8d8d8"></div>
<div class="a" style="left:1889px;top:709px;width:30px;height:1px;background:#d8d8d8"></div>
<svg class="a" style="left:1894px;top:374px" width="20" height="20" viewBox="0 0 20 20"><rect x="2" y="2" width="16" height="16" rx="3" fill="none" stroke="#333" stroke-width="1.5"/><path d="M5 6 H15 M7 9 H15 M7 12 H15 M5 15 H15" stroke="#333" stroke-width="1.4"/></svg>
<svg class="a" style="left:1894px;top:407px" width="20" height="20" viewBox="0 0 20 20"><rect x="1" y="1" width="8" height="7" fill="#3d7bd6"/><path d="M1 3.3 H9 M1 5.6 H9 M3.7 1 V8 M6.3 1 V8" stroke="#fff" stroke-width="0.6"/><path d="M10 6 L17 9 V16 L10 19 L3 16 V9 Z M3 9 L10 12 L17 9 M10 12 V19" fill="none" stroke="#333" stroke-width="1.3"/></svg>
<svg class="a" style="left:1894px;top:440px" width="20" height="20" viewBox="0 0 20 20"><rect x="1" y="1" width="5" height="5" fill="#aaa" stroke="#333" stroke-width="0.8"/><path d="M4 7 V11 H9" fill="none" stroke="#1f5cb8" stroke-width="1.2" stroke-dasharray="1.5 1"/><path d="M9 10 L11 8 H15 V13 H18 L16 17 H9Z" fill="#fff" stroke="#333" stroke-width="1.1"/></svg>
<svg class="a" style="left:1894px;top:473px" width="20" height="20" viewBox="0 0 20 20"><rect x="11" y="1" width="6" height="10" fill="none" stroke="#1f5cb8" stroke-width="1.2" stroke-dasharray="2 1.5"/><rect x="2" y="11" width="15" height="7" fill="#fff" stroke="#333" stroke-width="1.2"/><circle cx="14" cy="14.5" r="2.3" fill="none" stroke="#333" stroke-width="1.1"/></svg>
<svg class="a" style="left:1894px;top:506px" width="20" height="20" viewBox="0 0 20 20"><path d="M10 1 L18 6 V14 L10 19 L2 14 V6Z" fill="#5aa0d8"/><path d="M10 1 L10 10 L18 14 M10 10 L2 14" stroke="#fff" stroke-width="1"/><path d="M2 6 L10 10 L10 19 L2 14Z" fill="#2a64b8"/><path d="M10 10 L18 14 L10 19Z" fill="#7fb6e6"/></svg>
<svg class="a" style="left:1894px;top:539px" width="20" height="20" viewBox="0 0 20 20"><rect x="1" y="2" width="9" height="9" fill="none" stroke="#333" stroke-width="1.2"/><path d="M1 5 H10 M1 8 H10 M4 2 V11 M7 2 V11" stroke="#333" stroke-width="0.8"/><text x="4" y="19" font-family="Liberation Serif" font-style="italic" font-weight="bold" font-size="15" fill="#333">x</text><path d="M15 6 Q19 11 15 17" fill="none" stroke="#333" stroke-width="1.6"/></svg>
<svg class="a" style="left:1894px;top:584px" width="20" height="20" viewBox="0 0 20 20"><rect x="0" y="0" width="20" height="20" rx="2" fill="#ddd"/><rect x="1.5" y="1.5" width="17" height="17" fill="#1f5cb8" stroke="#111" stroke-width="0.8"/><text x="10" y="15.5" text-anchor="middle" font-family="Liberation Serif" font-weight="bold" font-size="12" fill="#fff" letter-spacing="-1">MK</text></svg>
<svg class="a" style="left:1894px;top:617px" width="20" height="20" viewBox="0 0 20 20"><rect x="0" y="0" width="20" height="20" rx="2" fill="#ddd"/><path d="M10 10 Q5 2 2 4 Q1 9 6 11 Q2 14 4 17 Q8 16 10 12 Q12 16 16 17 Q18 14 14 11 Q19 9 18 4 Q15 2 10 10Z" fill="#111"/></svg>
<svg class="a" style="left:1894px;top:650px" width="20" height="20" viewBox="0 0 20 20"><rect x="0" y="2" width="20" height="16" rx="2" fill="#ccc"/><rect x="2" y="6" width="16" height="10" rx="2" fill="#333"/><circle cx="7" cy="11" r="2.5" fill="#5aa0d8"/><circle cx="13" cy="11" r="2.5" fill="#5aa0d8"/><path d="M6 3 H14" stroke="#333" stroke-width="1.5"/></svg>
<svg class="a" style="left:1894px;top:683px" width="20" height="20" viewBox="0 0 20 20"><rect x="0" y="0" width="20" height="20" rx="2" fill="#5cb85c"/><path d="M3 5 Q7 4 10 6 Q13 4 17 5 V16 Q13 15 10 17 Q7 15 3 16Z" fill="#fff"/><path d="M10 6 V17" stroke="#5cb85c" stroke-width="1.2"/></svg>
<svg class="a" style="left:1894px;top:716px" width="20" height="20" viewBox="0 0 20 20"><rect x="0" y="0" width="20" height="20" rx="2" fill="#1f5cb8"/><rect x="1.5" y="1.5" width="17" height="17" fill="none" stroke="#111" stroke-width="0.8"/><path d="M3 5 Q7 4 10 6 Q13 4 17 5 V16 Q13 15 10 17 Q7 15 3 16Z" fill="#fff"/><path d="M10 6 V17" stroke="#1f5cb8" stroke-width="1.2"/></svg>
<svg class="a" style="left:1820px;top:1027px" width="20" height="16" viewBox="0 0 20 16"><path d="M2 10 H18 V15 H2Z" fill="#fff" stroke="#333" stroke-width="1.1"/><path d="M4 13 V15 M6 14 V15 M8 13 V15 M10 14 V15 M12 13 V15 M14 14 V15" stroke="#333" stroke-width="0.8"/><ellipse cx="12" cy="6.5" rx="6" ry="5" fill="#fff" stroke="#333" stroke-width="1.2"/><ellipse cx="12" cy="6" rx="2.5" ry="1.6" fill="none" stroke="#333" stroke-width="1"/><path d="M6 7 V12 M18 7 V10" stroke="#333" stroke-width="1.1"/></svg>
<svg class="a" style="left:1855px;top:1027px" width="20" height="16" viewBox="0 0 20 16"><path d="M1 15 A9 9 0 0 1 19 15 Z" fill="#fff" stroke="#333" stroke-width="1.2"/><path d="M6 15 A4 4 0 0 1 14 15" fill="none" stroke="#333" stroke-width="1.2"/><path d="M2 15 H18" stroke="#333" stroke-width="1.2"/></svg>
<svg class="a" style="left:1890px;top:1027px" width="18" height="17" viewBox="0 0 18 17"><path d="M9 1 V13 M2 4 H16 M1 14 H17" stroke="#333" stroke-width="1.4"/><path d="M4 4 L1.5 10 H6.5Z M14 4 L11.5 10 H16.5Z" fill="none" stroke="#333" stroke-width="1"/><rect x="1" y="14.5" width="16" height="2" fill="#333"/></svg>
<svg class="a" style="left:1250px;top:773px" width="12" height="12" viewBox="0 0 12 12"><circle cx="6" cy="6" r="4.8" fill="#fff" stroke="#333" stroke-width="1.3"/><circle cx="6" cy="6" r="1.8" fill="#333"/></svg>
<svg class="a" style="left:1740px;top:80px" width="179" height="180" viewBox="0 0 179 180">
<g fill="#8c8c8c">
<path d="M90 11 L97 19 H83Z"/>
<path d="M16 85.5 L25 78 V93Z"/>
<path d="M165 85.5 L156 78 V93Z"/>
<path d="M90 160 L97.5 150 H82.5Z"/>
<path d="M40 36 Q52 26 68 20 L70 27 Q56 32 47 40 L50 44 L36 45 L37 33Z"/>
<path d="M140 36 Q128 26 112 20 L110 27 Q124 32 133 40 L130 44 L144 45 L143 33Z"/>
</g>
<g>
<path d="M60 52 L92 43 L125 55 L128 102 L95 120 L55 108 L50 62Z" fill="#e8eaed"/>
<path d="M66 58 L91 50 L118 58 L94 68Z" fill="#fafbfc"/>
<path d="M57 72 L88 80 L90 113 L58 102Z" fill="#fafbfc"/>
<path d="M96 80 L122 64 L124 100 L96 114Z" fill="#fafbfc"/>
<text x="81" y="62" font-family="Liberation Sans" font-style="italic" font-size="9" fill="#333" transform="rotate(18 88 60)">Top</text>
<text x="62" y="100" font-family="Liberation Sans" font-size="11.5" fill="#222" transform="rotate(9 74 96)">Front</text>
<text x="104" y="100" font-family="Liberation Sans" font-style="italic" font-size="9.5" fill="#333" transform="rotate(-55 110 94)">Right</text>
</g>
<path d="M48.5 67 V117" stroke="#3b3bd0" stroke-width="1"/>
<text x="44" y="62" font-family="Liberation Sans" font-size="10" fill="#5555dd">Z</text>
<path d="M48.5 117 L99 133" stroke="#d03030" stroke-width="1"/>
<text x="103" y="139" font-family="Liberation Sans" font-size="11" fill="#e03030">X</text>
<path d="M48.5 117 L77 95" stroke="#50b050" stroke-width="0.8"/>
</svg>
<svg class="a" style="left:1866px;top:224px" width="32" height="18" viewBox="0 0 32 18"><path d="M9 1 L17 3 V12 L9 16 L1 13 V4Z" fill="#c9c9c9" stroke="#333" stroke-width="1"/><path d="M1 4 L9 6 L17 3 M9 6 V16" fill="none" stroke="#333" stroke-width="0.8"/><path d="M9 6 L17 3 V12 L9 16Z" fill="#eee"/><path d="M25 7 H31 L28 10Z" fill="#222"/></svg>
<svg class="a" style="left:0;top:0" width="1919" height="1079" viewBox="0 0 1919 1079"><path d="M592 607 C590 560 612 522 640 521 L668 528 C688 535 696 575 690 610 C686 640 668 662 645 663 L630 660 C605 656 593 635 592 607Z" fill="#222" stroke="#0d1a0d" stroke-width="0.8"/><path d="M668 528 C640 535 620 580 625 620 C628 645 640 660 645 663" fill="none" stroke="#0a0a0a" stroke-width="0.9"/><path d="M663 540 C645 548 632 585 636 620 C638 638 646 650 652 655" fill="none" stroke="#383838" stroke-width="1.2"/><path d="M660.0 545.0 L677.0 543.0 L681.0 553.0 L666.0 561.0Z" fill="#151515" stroke="#3a3a3a" stroke-width="1" stroke-linejoin="round"/><path d="M682.0 558.0 L690.0 565.0 L689.0 585.0 L680.0 578.0Z" fill="#151515" stroke="#3a3a3a" stroke-width="1" stroke-linejoin="round"/><path d="M641.0 556.0 L652.0 552.0 L654.0 566.0 L643.0 572.0Z" fill="#151515" stroke="#3a3a3a" stroke-width="1" stroke-linejoin="round"/><path d="M634.0 634.0 L652.0 634.0 L652.0 650.0 L638.0 652.0Z" fill="#151515" stroke="#3a3a3a" stroke-width="1" stroke-linejoin="round"/><path d="M655.0 625.0 L668.0 620.0 L666.0 640.0 L657.0 642.0Z" fill="#151515" stroke="#3a3a3a" stroke-width="1" stroke-linejoin="round"/><path d="M628.0 595.0 L636.0 588.0 L636.0 618.0 L628.0 618.0Z" fill="#151515" stroke="#3a3a3a" stroke-width="1" stroke-linejoin="round"/><ellipse cx="660" cy="598" rx="15" ry="29" transform="rotate(12 660 598)" fill="#252525" stroke="#3a3a3a" stroke-width="1.2"/><path d="M676 578 L960 656 L948 706 L674 631 C664 618 665 590 676 578Z" fill="#282828"/><path d="M676.0 578.0 L960.0 656.0" fill="none" stroke="#0d1a0d" stroke-width="1.15"/><path d="M674.0 631.0 L948.0 706.0" fill="none" stroke="#0d1a0d" stroke-width="1.15"/><path d="M737 594 C728 610 722 628 722 642 M860 629 C850 645 843 660 843 677" fill="none" stroke="#111" stroke-width="0.8"/><path d="M676 578 C664 590 664 620 674 631" fill="none" stroke="#111" stroke-width="0.8"/><path d="M628 564 C640 564 641 580 640 589 L657 595 C662 598 662 606 656 606 L640 601 C632 611 618 613 612 605 C604 592 607 567 628 564Z" fill="none" stroke="#f7b638" stroke-width="1.6"/><path d="M1257.0 262.0 L1273.0 243.0 L1300.0 242.0 L1478.0 287.0 L1495.0 295.0 L1470.0 335.0 L1390.0 420.0 L1290.0 412.0 L1262.0 378.0 L1252.0 344.0 L1253.0 290.0Z" fill="#262626" stroke="#0d1a0d" stroke-width="1.15" stroke-linejoin="round"/><path d="M1300 246 C1280 268 1262 310 1261 345 L1262 390" fill="none" stroke="#0d1a0d" stroke-width="0.9"/><path d="M1274 244 L1301 252" stroke="#2fc02f" stroke-width="1.6"/><path d="M1483.0 346.0 L1530.0 359.0 L1545.0 395.0 L1540.0 415.0 L1504.0 412.0 L1470.0 400.0Z" fill="#1f1f1f" stroke="#0d1a0d" stroke-width="1.15" stroke-linejoin="round"/><path d="M1490.0 352.0 L1528.0 362.0" fill="none" stroke="#0a0a0a" stroke-width="0.8"/><path d="M1492.0 364.0 L1528.0 374.0" fill="none" stroke="#0a0a0a" stroke-width="0.8"/><path d="M1494.0 376.0 L1528.0 386.0" fill="none" stroke="#0a0a0a" stroke-width="0.8"/><path d="M1496.0 388.0 L1528.0 398.0" fill="none" stroke="#0a0a0a" stroke-width="0.8"/><path d="M1498.0 400.0 L1528.0 410.0" fill="none" stroke="#0a0a0a" stroke-width="0.8"/><ellipse cx="1532" cy="388" rx="16" ry="30" transform="rotate(15 1532 388)" fill="#1e1e1e" stroke="#0d1a0d" stroke-width="0.9"/><ellipse cx="1534" cy="390" rx="10" ry="19" transform="rotate(15 1534 390)" fill="#222" stroke="#0a0a0a" stroke-width="1.2"/><ellipse cx="1536" cy="391" rx="5" ry="8" transform="rotate(15 1536 391)" fill="#333" stroke="#0a0a0a" stroke-width="0.8"/><path d="M984.0 633.0 L1135.0 505.0 L1140.0 490.0 L1152.0 483.0 L1166.0 483.0 L1262.0 392.0 L1275.0 400.0 L1240.0 480.0 L1100.0 640.0 L1010.0 720.0 L990.0 735.0Z" fill="#262626" stroke="#0d1a0d" stroke-width="1.15" stroke-linejoin="round"/><ellipse cx="971" cy="690" rx="24" ry="57" transform="rotate(15 971 690)" fill="#202020" stroke="#0d1a0d" stroke-width="0.9"/><ellipse cx="978" cy="692" rx="16" ry="48" transform="rotate(15 978 692)" fill="none" stroke="#111" stroke-width="0.8"/><path d="M1005.5 648.0 L1330.0 323.0 L1338.0 316.0 L1350.0 318.0 L1356.0 328.0 L1353.0 342.0 L1352.0 404.0 L1240.0 520.0 L1100.0 680.0 L1005.0 764.0 L988.8 775.0 L975.4 764.8 L970.4 748.0 L973.8 714.8 L988.8 669.7Z" fill="#3d9b3f" stroke="#0d1a0d" stroke-width="1.3" stroke-linejoin="round"/><path d="M1012.0 663.0 L1342.0 330.0" fill="none" stroke="#0d1a0d" stroke-width="1.15"/><path d="M1000.0 678.0 L1020.0 662.0" fill="none" stroke="#0d1a0d" stroke-width="0.8"/><path d="M1297.0 389.0 L1339.0 343.0 L1343.0 352.0 L1339.0 392.0Z" fill="#2b6f2c" stroke="#0d1a0d" stroke-width="1.15" stroke-linejoin="round"/><path d="M1308.1 385.4 L1338.3 352.3 L1341.2 358.8 L1338.3 387.6Z" fill="#1e1e1e"/><path d="M1202.0 466.0 L1240.0 432.0 L1251.0 438.0 L1246.0 472.0 L1220.0 504.0 L1202.0 504.0Z" fill="#2b6f2c" stroke="#0d1a0d" stroke-width="1.15" stroke-linejoin="round"/><path d="M1205.0 471.0 L1234.0 444.0 L1236.0 472.0 L1216.0 501.0 L1205.0 501.0Z" fill="#fff" stroke="none" stroke-width="0" stroke-linejoin="round"/><path d="M1267.0 438.0 L1291.0 426.0 L1305.0 430.0 L1277.0 463.0Z" fill="#2b6f2c" stroke="#0d1a0d" stroke-width="1.15" stroke-linejoin="round"/><path d="M1274.4 440.4 L1291.2 432.0 L1301.0 434.8 L1281.4 457.9Z" fill="#fff"/><path d="M1135.0 502.0 L1173.0 507.0 L1150.0 556.0Z" fill="#2b6f2c" stroke="#0d1a0d" stroke-width="1.15" stroke-linejoin="round"/><path d="M1140.5 507.9 L1170.9 511.9 L1152.5 551.1Z" fill="#1e1e1e"/><path d="M1182.0 490.0 L1197.0 487.0 L1197.0 523.0 L1182.0 525.0Z" fill="#2b6f2c" stroke="#0d1a0d" stroke-width="1.15" stroke-linejoin="round"/><path d="M1186.2 496.9 L1196.8 494.8 L1196.8 520.0 L1186.2 521.4Z" fill="#2b6f2c"/><path d="M1043.0 625.0 L1070.0 620.0 L1070.0 660.0 L1043.0 665.0Z" fill="#2b6f2c" stroke="#0d1a0d" stroke-width="1.15" stroke-linejoin="round"/><path d="M1049.0 632.2 L1068.0 628.8 L1068.0 656.8 L1049.0 660.2Z" fill="#2b6f2c"/><path d="M1053.0 645.0 L1082.0 618.0 L1080.0 690.0 L1057.0 693.0Z" fill="#2b6f2c" stroke="#0d1a0d" stroke-width="1.15" stroke-linejoin="round"/><path d="M1062.0 648.0 L1078.0 630.0 L1076.0 660.0 L1064.0 668.0Z" fill="#fff" stroke="none" stroke-width="0" stroke-linejoin="round"/><path d="M1064.0 668.0 L1076.0 660.0 L1075.0 686.0 L1060.0 688.0Z" fill="#1e1e1e" stroke="none" stroke-width="0" stroke-linejoin="round"/><path d="M1090.0 600.0 L1130.0 560.0 L1125.0 600.0 L1100.0 640.0Z" fill="#2b6f2c" stroke="#0d1a0d" stroke-width="1.15" stroke-linejoin="round"/><path d="M1100.0 605.0 L1122.0 580.0 L1120.0 598.0 L1104.0 628.0Z" fill="#1e1e1e" stroke="none" stroke-width="0" stroke-linejoin="round"/><path d="M1103.0 606.0 L1112.0 598.0 L1110.0 612.0Z" fill="#fff" stroke="none" stroke-width="0" stroke-linejoin="round"/><ellipse cx="1022" cy="705" rx="21" ry="38" transform="rotate(12 1022 705)" fill="#8f8f8f" stroke="#0d1a0d" stroke-width="0.9"/><ellipse cx="1024" cy="706" rx="15" ry="30" transform="rotate(12 1024 706)" fill="#c4c4c4" stroke="#333" stroke-width="0.8"/><ellipse cx="1026" cy="707" rx="11" ry="24" transform="rotate(12 1026 707)" fill="#1e1e1e" stroke="#111" stroke-width="0.8"/><ellipse cx="1251" cy="491" rx="16" ry="19" transform="rotate(12 1251 491)" fill="#9a9a9a" stroke="#0d1a0d" stroke-width="0.9"/><ellipse cx="1253" cy="493" rx="10" ry="13" transform="rotate(12 1253 493)" fill="#1e1e1e" stroke="#0d1a0d" stroke-width="0.9"/><ellipse cx="1200" cy="539" rx="18" ry="22" transform="rotate(12 1200 539)" fill="#9a9a9a" stroke="#0d1a0d" stroke-width="0.9"/><ellipse cx="1203" cy="541" rx="12" ry="16" transform="rotate(12 1203 541)" fill="#1e1e1e" stroke="#0d1a0d" stroke-width="0.9"/><path d="M1028.0 688.0 L1090.0 704.0 L1088.0 748.0 L1030.0 733.0Z" fill="#1e1e1e" stroke="#111" stroke-width="0.8" stroke-linejoin="round"/><path d="M1030.0 711.0 L1090.0 727.0" fill="none" stroke="#3a3a3a" stroke-width="1"/><path d="M1030.0 740.0 L1055.0 746.0 L1048.0 760.0 L1033.0 756.0Z" fill="#fff" stroke="none" stroke-width="0" stroke-linejoin="round"/><path d="M973.0 743.0 L1071.0 771.0 L1071.0 793.0 L973.0 765.0Z" fill="#1b1b1b" stroke="#0a0a0a" stroke-width="0.8" stroke-linejoin="round"/><path d="M1087.0 548.0 L1190.0 579.0 L1190.0 601.0 L1087.0 570.0Z" fill="#1b1b1b" stroke="#0a0a0a" stroke-width="0.8" stroke-linejoin="round"/><path d="M1249.0 385.0 L1349.0 415.0 L1349.0 437.0 L1249.0 407.0Z" fill="#1b1b1b" stroke="#0a0a0a" stroke-width="0.8" stroke-linejoin="round"/><path d="M1324.0 307.0 L1424.0 338.0 L1424.0 360.0 L1324.0 329.0Z" fill="#1b1b1b" stroke="#0a0a0a" stroke-width="0.8" stroke-linejoin="round"/><path d="M1191.0 580.0 L1293.0 612.0 L1293.0 632.0 L1191.0 600.0Z" fill="#6b675c" stroke="#222" stroke-width="0.6" stroke-linejoin="round"/><path d="M1205.0 585.0 L1205.0 604.0" fill="none" stroke="#a29e90" stroke-width="3"/><path d="M1220.0 589.6 L1220.0 608.6" fill="none" stroke="#a29e90" stroke-width="3"/><path d="M1235.0 594.2 L1235.0 613.2" fill="none" stroke="#a29e90" stroke-width="3"/><path d="M1250.0 598.8 L1250.0 617.8" fill="none" stroke="#a29e90" stroke-width="3"/><path d="M1265.0 603.4 L1265.0 622.4" fill="none" stroke="#a29e90" stroke-width="3"/><path d="M1280.0 608.0 L1280.0 627.0" fill="none" stroke="#a29e90" stroke-width="3"/><path d="M1083.5 670.0 L1470.0 283.0 L1488.0 288.0 L1500.0 300.0 L1505.0 330.0 L1503.0 372.0 L1487.0 404.0 L1421.0 540.0 L1330.0 603.0 L1313.0 616.0 L1260.0 657.0 L1180.0 719.0 L1085.0 784.0 L1068.0 790.0 L1052.0 782.0 L1047.0 768.0 L1051.8 736.8 L1066.8 691.7Z" fill="#3d9b3f" stroke="#0d1a0d" stroke-width="1.3" stroke-linejoin="round"/><path d="M1092.0 680.0 L1210.0 580.0 L1340.0 450.0 L1478.0 313.0" fill="none" stroke="#0d1a0d" stroke-width="1.15"/><path d="M1098.0 772.0 L1180.0 708.0 L1260.0 647.0 L1313.0 607.0" fill="none" stroke="#0d1a0d" stroke-width="1.15"/><path d="M1062.0 700.0 L1080.0 690.0" fill="none" stroke="#0d1a0d" stroke-width="0.8"/><path d="M1126.7 683.8 L1174.0 623.0 L1178.0 630.0 L1155.0 726.8 L1126.7 726.8Z" fill="#2b6f2c" stroke="#0d1a0d" stroke-width="1.15" stroke-linejoin="round"/><path d="M1128.0 684.0 L1149.0 663.0 L1138.5 722.3 L1127.0 722.3Z" fill="#fff" stroke="none" stroke-width="0" stroke-linejoin="round"/><path d="M1176.0 620.0 L1190.0 616.0 L1213.0 672.0 L1166.0 718.0 L1146.0 724.0Z" fill="#2b6f2c" stroke="#0d1a0d" stroke-width="1.15" stroke-linejoin="round"/><path d="M1164.5 702.0 L1180.0 637.0 L1197.0 667.0 L1197.0 676.0 L1192.0 683.0Z" fill="#fff" stroke="none" stroke-width="0" stroke-linejoin="round"/><path d="M1203.8 612.6 L1238.0 623.0 L1215.7 663.0Z" fill="#2b6f2c" stroke="#0d1a0d" stroke-width="1.15" stroke-linejoin="round"/><path d="M1207.0 620.0 L1230.5 621.5 L1218.6 652.7Z" fill="#fff" stroke="none" stroke-width="0" stroke-linejoin="round"/><path d="M1119.0 675.0 L1141.5 642.0 L1145.0 650.0 L1122.0 683.0Z" fill="#2b6f2c" stroke="#0d1a0d" stroke-width="1.15" stroke-linejoin="round"/><path d="M1247.0 642.0 L1260.0 623.0 L1266.0 626.0 L1252.0 650.0Z" fill="#2b6f2c" stroke="#0d1a0d" stroke-width="1.15" stroke-linejoin="round"/><path d="M1276.0 470.0 L1310.0 462.0 L1312.0 526.0 L1279.0 530.0Z" fill="#2b6f2c" stroke="#0d1a0d" stroke-width="1.15" stroke-linejoin="round"/><path d="M1281.0 476.0 L1306.0 468.0 L1308.0 520.0 L1284.0 525.0Z" fill="#56534b" stroke="#222" stroke-width="0.6" stroke-linejoin="round"/><path d="M1284.0 521.0 L1303.0 516.0" fill="none" stroke="#9a9686" stroke-width="2.4"/><path d="M1287.6 511.5 L1306.6 506.5" fill="none" stroke="#9a9686" stroke-width="2.4"/><path d="M1291.2 502.0 L1310.2 497.0" fill="none" stroke="#9a9686" stroke-width="2.4"/><path d="M1294.8 492.5 L1313.8 487.5" fill="none" stroke="#9a9686" stroke-width="2.4"/><path d="M1298.4 483.0 L1317.4 478.0" fill="none" stroke="#9a9686" stroke-width="2.4"/><path d="M1302.0 473.5 L1321.0 468.5" fill="none" stroke="#9a9686" stroke-width="2.4"/><path d="M1213.0 576.0 L1240.0 530.0 L1254.0 524.0 L1253.0 562.0 L1230.0 581.0Z" fill="#56534b" stroke="#222" stroke-width="0.6" stroke-linejoin="round"/><path d="M1218.0 570.0 L1234.0 566.0" fill="none" stroke="#9a9686" stroke-width="2.4"/><path d="M1224.0 561.5 L1240.0 557.5" fill="none" stroke="#9a9686" stroke-width="2.4"/><path d="M1230.0 553.0 L1246.0 549.0" fill="none" stroke="#9a9686" stroke-width="2.4"/><path d="M1236.0 544.5 L1252.0 540.5" fill="none" stroke="#9a9686" stroke-width="2.4"/><path d="M1242.0 536.0 L1258.0 532.0" fill="none" stroke="#9a9686" stroke-width="2.4"/><path d="M1248.0 527.5 L1264.0 523.5" fill="none" stroke="#9a9686" stroke-width="2.4"/><ellipse cx="1103" cy="727" rx="22" ry="40" transform="rotate(12 1103 727)" fill="#8f8f8f" stroke="#0d1a0d" stroke-width="0.9"/><ellipse cx="1105" cy="728" rx="17" ry="33" transform="rotate(12 1105 728)" fill="#c4c4c4" stroke="#333" stroke-width="0.8"/><ellipse cx="1109" cy="729" rx="14" ry="27" transform="rotate(12 1109 729)" fill="#f5b73a" stroke="#c48a18" stroke-width="0.8"/><ellipse cx="1276" cy="575" rx="21" ry="40" transform="rotate(12 1276 575)" fill="#8f8f8f" stroke="#0d1a0d" stroke-width="0.9"/><ellipse cx="1278" cy="576" rx="16" ry="33" transform="rotate(12 1278 576)" fill="#c4c4c4" stroke="#333" stroke-width="0.8"/><ellipse cx="1283" cy="577" rx="14" ry="27" transform="rotate(12 1283 577)" fill="#f5b73a" stroke="#c48a18" stroke-width="0.8"/><path d="M1436.0 322.0 L1468.0 312.0 L1482.0 318.0 L1491.0 335.0 L1492.0 350.0 L1470.0 372.0 L1446.0 392.0 L1428.0 392.0 L1424.0 360.0Z" fill="#2b6f2c" stroke="#0d1a0d" stroke-width="1.15" stroke-linejoin="round"/><path d="M1432.0 326.0 L1466.0 316.0 L1474.0 328.0 L1476.0 352.0 L1452.0 380.0 L1432.0 390.0 L1426.0 360.0Z" fill="#1e1e1e" stroke="none" stroke-width="0" stroke-linejoin="round"/><ellipse cx="1450" cy="362" rx="13" ry="22" transform="rotate(15 1450 362)" fill="none" stroke="#0a0a0a" stroke-width="1.2"/><path d="M1352.0 452.0 L1483.0 346.0 L1504.0 355.0 L1400.0 443.0 L1372.0 464.0Z" fill="#262626" stroke="#0d1a0d" stroke-width="1.15" stroke-linejoin="round"/><path d="M1487.5 404.0 L1504.0 409.0 L1450.0 490.0 L1440.0 496.0 L1421.0 540.0 L1400.0 525.0 L1419.0 490.0Z" fill="#262626" stroke="#0d1a0d" stroke-width="1.15" stroke-linejoin="round"/><path d="M1345 454 C1318 470 1296 530 1298 572 C1300 604 1318 620 1340 620 L1363 626 L1400 600 L1390 460Z" fill="#1f1f1f" stroke="#0d1a0d" stroke-width="0.8"/><ellipse cx="1376" cy="545" rx="45" ry="81" transform="rotate(12 1376 545)" fill="#262626" stroke="#0d1a0d" stroke-width="0.9"/><path d="M1372 455 C1342 490 1326 560 1336 618" fill="none" stroke="#0a0a0a" stroke-width="2" stroke-dasharray="3 2"/><ellipse cx="1383" cy="546" rx="17" ry="28" transform="rotate(12 1383 546)" fill="none" stroke="#0a0a0a" stroke-width="1"/><ellipse cx="1384" cy="546" rx="12" ry="22" transform="rotate(12 1384 546)" fill="#f5b73a" stroke="#c48a18" stroke-width="0.8"/><path d="M1328 312 L1420 343 M1328 324 L1420 355" stroke="#f7b638" stroke-width="1.5"/><ellipse cx="1321" cy="317" rx="6" ry="11" transform="rotate(15 1321 317)" fill="#f5b73a"/><ellipse cx="1324" cy="318" rx="10" ry="14" transform="rotate(15 1324 318)" fill="none" stroke="#f7b638" stroke-width="1.6"/><ellipse cx="1424" cy="349" rx="7.5" ry="12" transform="rotate(15 1424 349)" fill="#f5b73a" stroke="#f7b638" stroke-width="1.6"/><path d="M1253 390 L1345 420 M1253 402 L1345 432" stroke="#f7b638" stroke-width="1.5"/><ellipse cx="1246" cy="395" rx="6" ry="11" transform="rotate(15 1246 395)" fill="#f5b73a"/><ellipse cx="1249" cy="396" rx="10" ry="14" transform="rotate(15 1249 396)" fill="none" stroke="#f7b638" stroke-width="1.6"/><ellipse cx="1349" cy="426" rx="7.5" ry="12" transform="rotate(15 1349 426)" fill="#f5b73a" stroke="#f7b638" stroke-width="1.6"/><path d="M1091 553 L1186 584 M1091 565 L1186 596" stroke="#f7b638" stroke-width="1.5"/><ellipse cx="1084" cy="558" rx="6" ry="11" transform="rotate(15 1084 558)" fill="#f5b73a"/><ellipse cx="1087" cy="559" rx="10" ry="14" transform="rotate(15 1087 559)" fill="none" stroke="#f7b638" stroke-width="1.6"/><ellipse cx="1190" cy="590" rx="7.5" ry="12" transform="rotate(15 1190 590)" fill="#f5b73a" stroke="#f7b638" stroke-width="1.6"/><path d="M1195 584 L1289 616 M1195 596 L1289 628" stroke="#f7b638" stroke-width="1.5"/><ellipse cx="1293" cy="622" rx="7.5" ry="12" transform="rotate(15 1293 622)" fill="#f5b73a" stroke="#f7b638" stroke-width="1.6"/><path d="M977 748 L1067 776 M977 760 L1067 788" stroke="#f7b638" stroke-width="1.5"/><ellipse cx="970" cy="753" rx="6" ry="11" transform="rotate(15 970 753)" fill="#f5b73a"/><ellipse cx="973" cy="754" rx="10" ry="14" transform="rotate(15 973 754)" fill="none" stroke="#f7b638" stroke-width="1.6"/><ellipse cx="1071" cy="782" rx="7.5" ry="12" transform="rotate(15 1071 782)" fill="#f5b73a" stroke="#f7b638" stroke-width="1.6"/><path d="M1352 422 L1430 455 M1352 434 L1430 467" stroke="#f7b638" stroke-width="1.5"/><ellipse cx="1433" cy="462" rx="7.5" ry="12" transform="rotate(15 1433 462)" fill="#f5b73a" stroke="#f7b638" stroke-width="1.6"/><ellipse cx="1472" cy="298" rx="7" ry="11" transform="rotate(15 1472 298)" fill="#f5b73a" stroke="#f7b638" stroke-width="1.6"/><path d="M1442 290 L1470 297 M1440 302 L1468 309 M1442 290 C1436 292 1436 300 1440 302" fill="none" stroke="#f7b638" stroke-width="1.5"/><path transform="translate(1154 545) scale(1.0)" d="M-10 -18 C2 -22 6 -8 4 0 L20 4 C26 6 26 14 20 14 L4 10 C0 22 -12 24 -16 12 C-20 0 -18 -14 -10 -18Z" fill="none" stroke="#f7b638" stroke-width="1.5"/><path transform="translate(1238 493) scale(1.0)" d="M-10 -18 C2 -22 6 -8 4 0 L20 4 C26 6 26 14 20 14 L4 10 C0 22 -12 24 -16 12 C-20 0 -18 -14 -10 -18Z" fill="none" stroke="#f7b638" stroke-width="1.5"/><path d="M1406 412 L1440 422 C1450 418 1452 440 1440 440 L1408 430 C1400 428 1400 414 1406 412Z" fill="none" stroke="#f7b638" stroke-width="1.5"/><path d="M1445 382 L1480 392 C1490 386 1495 410 1482 410 L1447 400 C1440 398 1440 384 1445 382Z" fill="none" stroke="#f7b638" stroke-width="1.5"/><path d="M1090 720 L1105 724 M1088 735 L1103 739 C1085 740 1082 722 1090 720" fill="none" stroke="#f7b638" stroke-width="1.5"/><path d="M1262 568 L1278 572 M1260 582 L1276 586 C1252 584 1254 568 1262 568" fill="none" stroke="#f7b638" stroke-width="1.5"/><path d="M1352 535 L1375 540 M1350 548 L1373 553 C1344 552 1344 536 1352 535" fill="none" stroke="#f7b638" stroke-width="1.5"/></svg>
</body></html>
